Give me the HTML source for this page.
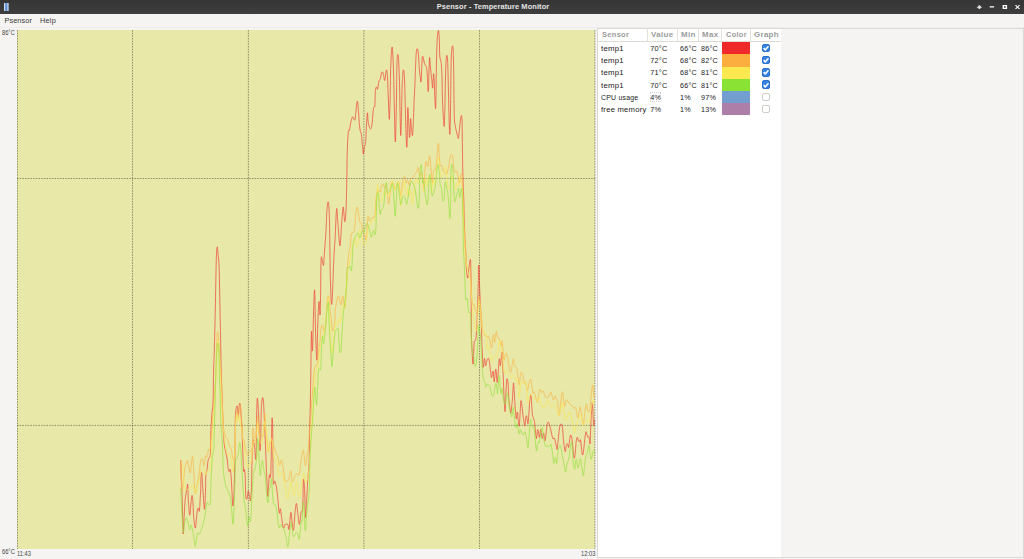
<!DOCTYPE html>
<html><head><meta charset="utf-8"><title>Psensor - Temperature Monitor</title>
<style>
html,body{margin:0;padding:0;}
body{width:1024px;height:559px;overflow:hidden;background:#f5f4f2;font-family:"Liberation Sans",sans-serif;position:relative;}
.abs{position:absolute;}
#title{left:0;top:0;width:1024px;height:14px;background:linear-gradient(#353535,#3e3e3e);}
#title .t{position:absolute;left:0;width:986px;top:2.4px;text-align:center;color:#e6e6e6;font-weight:bold;font-size:7.4px;line-height:9px;letter-spacing:0.12px;}
#menu{left:0;top:14px;width:1024px;height:12.5px;background:#f5f4f2;border-bottom:1px solid #efedea;font-size:7.4px;color:#3a3a3a;}
#menu span{position:absolute;top:2px;line-height:9px;letter-spacing:0.2px;}
#plot{left:17px;top:30px;width:578.2px;height:519px;background:#e8e8a8;}
.lbl{position:absolute;font-size:6.5px;color:#444;line-height:7px;transform:scaleX(0.88);transform-origin:0 0;white-space:nowrap;}
#panel{left:598px;top:29px;width:183.3px;height:528px;background:#fff;}
#hdr{position:absolute;left:598px;top:29px;width:183.3px;height:12px;border-bottom:1px solid #dedbd7;}
#hdr span{position:absolute;top:0.8px;transform-origin:0 0;font-size:7.2px;line-height:9px;font-weight:bold;color:#9b9b9b;letter-spacing:0.3px;}
#hdr i{position:absolute;top:0;width:1px;height:12px;background:#e4e1dd;}
.row{position:absolute;left:0;width:1024px;height:12.2px;}
.row .c{position:absolute;top:2px;transform-origin:0 0;font-size:7.3px;line-height:9px;color:#1a1a1a;letter-spacing:0.22px;white-space:nowrap;}
.sw{position:absolute;left:722px;top:0;width:28.5px;height:12.3px;}
.cb{position:absolute;left:761.7px;top:1.7px;width:8.4px;height:8.4px;box-sizing:border-box;border:1px solid #cfcbc6;border-radius:2px;background:#fff;}
.cb.on{background:#3584e4;border-color:#2a6fc9;}
.cb svg{position:absolute;left:-0.8px;top:-0.8px;}
.foc{position:absolute;left:649.9px;top:1.4px;width:11.3px;height:9.4px;border-radius:1px;border:1px dotted #d0d0d0;box-sizing:border-box;}
</style></head><body>
<div id="title" class="abs"><div class="t">Psensor - Temperature Monitor</div>
<svg class="abs" style="left:0;top:0" width="1024" height="14" viewBox="0 0 1024 14">
<rect x="4" y="3" width="4.5" height="8" fill="#5b8fd9"/><rect x="4" y="3" width="1.2" height="8" fill="#cfd8e8"/><rect x="7.3" y="3" width="1.2" height="8" fill="#cfd8e8"/>
<g fill="#fff" stroke="none">
<path d="M976.6,7.7 L979.4,5 L982.2,7.7 L980.3,7.7 L980.3,9.1 L978.5,9.1 L978.5,7.7 Z" fill="#e8e8e8"/>
<rect x="989.7" y="6.1" width="4.4" height="1.5" fill="#e0e0e0"/>
<path d="M1002.6,4.9 h4.5 v4.2 h-4.5 Z M1004,6.2 v1.6 h1.7 v-1.6 Z" fill-rule="evenodd"/>
<path d="M1014.9,5 L1016.3,5 L1017.5,6.4 L1018.7,5 L1020.1,5 L1018.3,7.05 L1020.1,9.1 L1018.7,9.1 L1017.5,7.7 L1016.3,9.1 L1014.9,9.1 L1016.7,7.05 Z"/>
</g></svg>
</div>
<div id="menu" class="abs"><span style="left:4.4px;letter-spacing:0.07px">Psensor</span><span style="left:40px">Help</span></div>
<div id="plot" class="abs"></div>
<svg class="abs" style="left:0;top:0" width="1024" height="559" viewBox="0 0 1024 559">
<g stroke="#5e5e44" stroke-width="0.62" stroke-dasharray="1.6,1.07" fill="none">
<path d="M17.5,30V549M132.5,30V549M248.4,30V549M363.9,30V549M479.5,30V549M594.9,30V549M17,178.5H595.2M17,425.4H595.2"/>
</g>
<g fill="none" stroke-width="0.72" stroke-linejoin="round" stroke-linecap="round" opacity="0.86">
<path d="M180.8,460.6C180.9,463.8 181.1,475.1 181.3,480.0C181.5,484.9 181.7,484.2 181.9,490.0C182.1,495.8 182.4,507.7 182.6,515.0C182.8,522.3 183.0,534.0 183.3,534.0C183.6,534.0 183.9,520.5 184.2,515.0C184.5,509.4 184.8,504.5 185.1,500.7C185.4,496.9 185.9,494.4 186.3,492.0C186.7,489.6 187.1,487.3 187.3,486.0C187.5,484.7 187.5,483.5 187.6,484.2C187.7,484.9 187.9,487.2 188.0,490.0C188.1,492.8 188.1,496.5 188.4,500.7C188.7,504.9 189.3,514.8 189.7,515.2C190.1,515.6 190.6,506.3 191.0,503.0C191.4,499.7 191.8,495.4 192.1,495.4C192.4,495.4 192.7,499.4 193.0,503.0C193.3,506.6 193.3,512.7 193.7,516.9C194.1,521.1 194.8,527.9 195.3,528.1C195.8,528.3 196.1,521.1 196.5,518.0C196.9,514.9 197.2,510.9 197.5,509.3C197.8,507.7 198.3,508.0 198.6,508.3C198.9,508.6 199.2,512.4 199.4,511.0C199.7,509.6 199.9,503.5 200.1,500.0C200.3,496.5 200.5,494.2 200.7,490.0C200.8,485.8 200.9,477.9 201.0,475.0C201.1,472.1 201.3,472.4 201.5,472.4C201.7,472.4 201.8,472.1 202.0,475.0C202.2,477.9 202.5,484.3 202.9,490.0C203.3,495.7 204.1,509.3 204.5,509.3C204.9,509.3 205.3,495.7 205.5,490.0C205.7,484.3 205.6,478.2 205.8,475.0C206.0,471.8 206.6,472.2 206.9,470.8C207.2,469.4 207.2,468.1 207.4,466.5C207.6,464.9 207.8,462.5 208.0,461.1C208.2,459.8 208.5,459.1 208.8,458.4C209.1,457.7 209.5,458.0 209.8,457.1C210.1,456.2 210.3,455.1 210.4,453.1C210.5,451.1 210.5,448.9 210.6,445.0C210.7,441.1 210.7,435.3 210.9,430.0C211.1,424.7 211.6,417.8 212.0,413.0C212.4,408.2 212.8,408.3 213.1,401.1C213.4,393.9 213.4,378.5 213.6,370.0C213.8,361.5 214.0,360.2 214.3,350.0C214.6,339.8 215.0,323.9 215.3,308.9C215.6,293.8 216.0,270.0 216.3,259.7C216.6,249.4 216.9,247.6 217.2,246.9C217.5,246.2 217.9,251.9 218.2,255.7C218.5,259.5 218.9,259.0 219.2,269.5C219.5,280.0 219.9,305.3 220.2,318.7C220.5,332.1 220.6,339.1 220.8,350.0C221.0,360.9 221.3,374.8 221.6,384.0C221.9,393.2 222.1,397.7 222.4,405.4C222.7,413.1 223.0,423.4 223.3,430.0C223.6,436.6 224.0,441.6 224.3,445.0C224.7,448.4 225.0,448.6 225.4,450.4C225.8,452.2 226.2,454.1 226.5,455.7C226.8,457.3 227.1,458.4 227.3,460.0C227.5,461.6 227.6,463.6 227.8,465.4C228.0,467.2 228.3,469.8 228.6,470.8C228.9,471.8 229.2,471.7 229.5,471.4C229.8,471.1 229.9,468.6 230.2,469.2C230.4,469.8 230.7,471.6 231.0,475.1C231.3,478.6 231.6,484.8 231.9,490.0C232.2,495.2 232.5,506.1 232.9,506.1C233.3,506.1 233.8,497.3 234.1,490.0C234.4,482.7 234.6,472.2 234.8,462.2C235.0,452.2 235.1,438.2 235.2,430.0C235.3,421.8 235.3,416.9 235.6,413.0C235.8,409.1 236.4,407.5 236.7,406.5C237.0,405.5 237.1,405.6 237.4,407.0C237.7,408.4 238.0,415.5 238.3,415.1C238.6,414.7 239.1,406.3 239.4,404.4C239.7,402.5 239.7,403.6 239.9,403.8C240.1,404.0 240.2,403.0 240.4,405.4C240.6,407.8 241.0,414.2 241.3,418.3C241.6,422.4 241.8,425.4 242.0,430.0C242.2,434.6 242.4,440.7 242.6,446.1C242.8,451.5 243.0,458.0 243.2,462.2C243.4,466.4 243.5,470.1 243.7,471.4C243.9,472.6 244.2,468.5 244.5,469.7C244.8,470.9 245.1,473.9 245.3,478.3C245.5,482.8 245.5,493.0 245.8,496.4C246.1,499.8 246.7,499.5 247.1,498.6C247.5,497.7 247.8,491.4 248.2,491.0C248.6,490.6 249.2,494.8 249.6,496.4C250.0,498.0 250.1,501.8 250.4,500.7C250.7,499.6 251.1,496.4 251.4,490.0C251.7,483.6 251.8,469.9 252.0,462.2C252.2,454.5 252.5,447.8 252.8,444.0C253.1,440.2 253.4,439.7 253.6,439.7C253.8,439.7 254.0,442.0 254.2,444.0C254.4,446.0 254.7,448.9 254.9,451.5C255.2,454.1 255.5,459.5 255.7,459.5C255.9,459.5 256.1,456.4 256.2,451.5C256.3,446.6 256.3,436.4 256.4,430.0C256.5,423.6 256.5,418.3 256.7,413.0C256.9,407.7 257.1,398.1 257.4,398.1C257.7,398.1 258.2,407.7 258.5,413.0C258.8,418.3 258.9,423.8 259.2,430.0C259.4,436.2 259.8,448.6 260.0,450.4C260.2,452.2 260.5,444.1 260.6,440.7C260.8,437.3 260.8,435.5 260.9,430.0C261.0,424.5 261.1,413.0 261.4,407.6C261.7,402.2 262.1,398.6 262.5,397.7C262.9,396.8 263.2,398.8 263.5,402.2C263.8,405.6 264.1,413.7 264.3,418.3C264.5,422.9 264.6,424.5 264.8,430.0C265.0,435.5 265.4,443.4 265.7,451.5C266.0,459.6 266.5,471.9 266.8,478.3C267.1,484.7 267.1,487.0 267.3,490.0C267.5,493.0 267.6,496.4 267.8,496.4C268.0,496.4 268.0,493.6 268.3,490.0C268.6,486.4 269.0,477.2 269.4,475.1C269.8,473.0 270.2,479.5 270.5,477.3C270.8,475.1 270.9,468.3 271.1,462.2C271.3,456.1 271.4,446.1 271.5,440.7C271.6,435.3 271.6,433.6 271.7,430.0C271.8,426.4 271.8,420.5 271.9,418.9C272.0,417.3 272.4,416.9 272.5,420.5C272.6,424.1 272.7,430.5 272.8,440.7C272.9,450.9 272.9,474.9 273.2,481.6C273.5,488.3 274.3,480.1 274.8,481.0C275.3,481.9 276.0,485.0 276.4,487.0C276.8,489.0 276.9,490.7 277.2,493.0C277.5,495.3 277.6,497.3 278.0,500.7C278.4,504.1 278.9,511.8 279.3,513.1C279.7,514.5 280.0,507.8 280.4,508.8C280.8,509.8 281.3,515.8 281.8,519.0C282.3,522.2 282.9,527.2 283.4,528.1C283.9,529.0 284.6,525.0 285.0,524.4C285.4,523.8 285.5,524.4 286.0,524.4C286.5,524.4 287.4,523.8 287.9,524.6C288.4,525.4 288.5,531.2 289.0,529.2C289.5,527.2 290.3,514.1 290.8,512.6C291.3,511.1 291.4,517.2 291.9,520.1C292.3,523.0 293.0,531.7 293.5,530.3C294.0,528.9 294.6,516.0 295.1,511.5C295.6,507.0 296.1,503.0 296.5,503.4C296.9,503.8 297.3,510.1 297.8,513.6C298.3,517.1 298.9,524.6 299.4,524.4C299.9,524.2 300.5,514.9 301.0,512.6C301.5,510.4 302.0,513.2 302.3,510.9C302.6,508.6 302.9,502.8 303.0,498.6C303.1,494.5 303.1,489.2 303.2,486.0C303.3,482.8 303.3,479.7 303.5,479.4C303.7,479.1 304.0,481.4 304.2,484.0C304.4,486.6 304.6,489.4 304.8,495.0C305.0,500.6 305.2,516.6 305.5,517.4C305.8,518.2 306.3,504.9 306.6,500.0C306.9,495.1 307.1,492.0 307.3,488.0C307.5,484.0 307.7,480.5 308.0,476.2C308.3,471.9 308.8,469.9 309.1,462.2C309.4,454.5 309.4,438.7 309.6,430.0C309.8,421.3 310.0,418.3 310.2,410.0C310.4,401.7 310.5,390.0 310.7,380.0C310.9,370.0 311.0,357.9 311.1,349.8C311.2,341.7 311.4,332.1 311.5,331.3C311.6,330.5 311.9,341.7 312.0,345.0C312.1,348.3 312.3,351.3 312.4,351.0C312.5,350.7 312.6,349.5 312.8,343.0C313.0,336.5 313.3,320.8 313.6,312.0C313.9,303.2 314.3,288.7 314.6,290.0C314.9,291.3 315.1,310.8 315.3,320.0C315.5,329.2 315.7,338.3 316.0,345.0C316.3,351.7 316.6,361.7 316.9,360.0C317.1,358.3 317.3,343.3 317.5,335.0C317.7,326.7 318.1,315.6 318.3,310.0C318.6,304.4 318.8,301.7 319.0,301.5C319.2,301.3 319.4,306.8 319.6,309.0C319.8,311.2 319.9,316.9 320.1,314.6C320.3,312.3 320.5,302.8 320.6,295.0C320.7,287.2 320.8,274.3 320.9,268.0C321.0,261.7 321.1,258.2 321.4,257.0C321.6,255.8 322.0,259.6 322.4,261.0C322.8,262.4 323.2,266.0 323.5,265.5C323.8,265.0 323.9,260.6 324.1,258.0C324.3,255.4 324.3,254.2 324.6,250.0C324.9,245.8 325.5,239.8 325.9,233.0C326.3,226.2 326.6,214.4 327.0,209.3C327.4,204.2 328.0,200.3 328.4,202.4C328.8,204.5 329.2,209.2 329.5,222.0C329.8,234.8 330.0,265.7 330.4,279.4C330.8,293.1 331.2,307.3 331.8,304.0C332.4,300.7 333.3,270.4 333.8,259.7C334.3,249.0 334.5,248.5 335.0,240.0C335.5,231.5 336.1,211.3 336.6,208.8C337.1,206.3 337.4,218.8 338.0,225.0C338.6,231.2 339.3,245.9 339.9,245.9C340.5,245.9 341.0,231.4 341.5,225.0C342.0,218.6 342.7,208.9 343.1,207.2C343.5,205.5 343.7,212.6 344.0,215.0C344.3,217.4 344.6,222.5 344.9,221.7C345.2,220.9 345.7,215.3 346.0,210.0C346.3,204.7 346.4,197.5 346.6,190.0C346.8,182.5 346.9,172.5 347.0,165.0C347.1,157.5 347.3,150.6 347.5,145.0C347.7,139.4 348.1,133.7 348.4,131.2C348.7,128.7 349.1,131.5 349.5,130.1C349.9,128.7 350.2,124.8 350.7,122.6C351.2,120.4 351.9,118.0 352.4,117.2C352.8,116.4 353.0,117.3 353.4,117.8C353.8,118.2 354.6,121.2 355.0,119.9C355.4,118.6 355.7,112.8 356.1,109.7C356.5,106.6 357.0,100.7 357.4,101.1C357.8,101.5 358.1,107.8 358.5,111.9C358.9,116.0 359.1,122.4 359.5,125.8C359.9,129.2 360.3,131.1 360.6,132.3C360.9,133.6 361.1,131.9 361.3,133.3C361.5,134.7 361.8,138.4 362.0,140.9C362.2,143.4 362.6,146.4 362.8,148.6C363.0,150.8 363.1,154.2 363.4,154.0C363.6,153.8 364.0,149.1 364.3,147.5C364.6,145.9 365.1,145.6 365.3,144.3C365.6,143.1 365.6,142.7 365.8,140.0C366.0,137.3 366.0,132.5 366.3,128.0C366.6,123.5 367.1,114.0 367.4,112.9C367.7,111.8 367.8,119.1 368.1,121.5C368.5,123.9 369.0,126.2 369.5,127.4C370.0,128.6 370.7,129.3 371.1,128.5C371.6,127.7 371.8,125.7 372.2,122.6C372.6,119.5 372.9,112.4 373.3,109.7C373.7,107.0 374.1,107.2 374.4,106.5C374.7,105.8 374.7,108.1 374.9,105.4C375.1,102.7 375.1,93.5 375.4,90.4C375.7,87.4 376.1,87.3 376.5,87.1C376.9,86.9 377.2,90.1 377.6,89.2C378.0,88.3 378.3,83.5 378.8,81.7C379.3,79.9 379.9,79.9 380.4,78.5C380.8,77.1 381.1,74.2 381.5,73.1C381.9,72.0 382.2,71.6 382.6,72.0C383.0,72.4 383.2,73.9 383.6,75.3C384.0,76.7 384.3,81.0 384.7,80.6C385.1,80.2 385.5,74.9 385.8,73.1C386.1,71.3 386.3,69.4 386.6,69.9C386.9,70.4 387.1,72.1 387.4,76.3C387.7,80.5 387.9,87.8 388.2,95.0C388.5,102.2 389.0,118.6 389.3,119.4C389.6,120.2 389.9,108.1 390.1,100.0C390.3,91.9 390.4,78.9 390.6,71.0C390.8,63.1 391.1,56.7 391.4,52.7C391.7,48.8 391.9,46.0 392.2,47.3C392.5,48.5 392.8,54.5 393.1,60.2C393.4,65.9 393.6,73.4 393.8,81.7C394.0,90.0 394.1,100.0 394.4,110.0C394.6,120.0 395.0,140.7 395.3,141.9C395.6,143.1 395.9,126.2 396.1,117.2C396.3,108.2 396.5,96.6 396.6,88.0C396.7,79.4 396.8,70.9 396.9,65.6C397.0,60.2 397.2,57.6 397.4,55.9C397.6,54.2 397.9,53.8 398.1,55.4C398.4,57.0 398.7,61.2 398.9,65.6C399.1,70.0 399.3,74.3 399.5,81.7C399.7,89.1 399.8,101.0 400.0,110.0C400.2,119.0 400.5,134.3 400.7,135.5C400.9,136.7 401.2,125.1 401.4,117.2C401.6,109.3 401.9,94.8 402.1,88.0C402.3,81.2 402.5,79.3 402.7,76.3C402.9,73.3 403.2,69.9 403.5,69.9C403.8,69.9 404.1,72.1 404.3,76.3C404.6,80.5 404.8,87.3 405.0,95.0C405.2,102.7 405.4,114.0 405.7,122.6C406.0,131.2 406.4,143.5 406.6,146.4C406.9,149.3 407.1,144.9 407.2,140.0C407.3,135.1 407.4,122.6 407.5,117.2C407.6,111.8 407.7,106.7 407.9,107.6C408.1,108.5 408.4,117.6 408.7,122.6C409.0,127.6 409.3,137.6 409.6,137.6C409.9,137.6 410.2,125.7 410.4,122.6C410.6,119.5 410.5,117.9 410.7,118.8C410.9,119.7 411.1,125.2 411.4,128.0C411.7,130.8 412.2,136.4 412.5,135.5C412.8,134.6 413.0,128.3 413.3,122.6C413.6,116.9 413.8,107.9 414.1,101.1C414.4,94.3 414.8,87.6 415.0,81.7C415.2,75.8 415.4,70.6 415.6,65.6C415.8,60.6 416.1,54.4 416.4,51.6C416.7,48.8 417.1,48.4 417.5,48.9C417.9,49.4 418.2,51.6 418.5,54.9C418.8,58.2 419.0,65.2 419.3,68.8C419.6,72.4 419.9,74.1 420.2,76.3C420.5,78.5 420.7,83.5 421.0,81.7C421.3,79.9 421.6,69.8 421.8,65.6C422.1,61.4 422.2,57.6 422.5,56.5C422.8,55.4 423.3,58.0 423.6,59.1C423.9,60.2 424.1,62.3 424.4,63.4C424.7,64.5 425.1,64.9 425.5,65.6C425.9,66.3 426.3,65.9 426.6,67.7C426.9,69.5 427.2,72.6 427.4,76.3C427.6,80.0 427.7,87.6 427.9,89.8C428.1,92.0 428.3,92.6 428.5,89.3C428.7,86.0 428.8,75.3 429.0,70.0C429.2,64.7 429.4,58.2 429.6,57.5C429.8,56.8 430.1,63.2 430.3,66.0C430.6,68.8 430.8,71.6 431.1,74.2C431.4,76.8 431.8,79.4 432.0,81.7C432.2,84.0 432.4,88.5 432.6,88.2C432.8,87.9 432.9,82.4 433.1,80.0C433.3,77.6 433.4,73.3 433.6,73.6C433.8,73.9 434.1,77.1 434.3,81.7C434.5,86.3 434.8,96.6 435.0,101.1C435.2,105.6 435.4,109.5 435.6,108.6C435.8,107.7 435.9,103.8 436.0,95.7C436.1,87.6 436.3,69.7 436.5,60.2C436.7,50.7 437.0,43.7 437.3,38.7C437.6,33.7 438.1,30.4 438.4,30.4C438.7,30.4 439.1,34.6 439.3,38.7C439.5,42.8 439.5,51.3 439.7,54.9C439.9,58.5 440.3,58.5 440.6,60.2C440.9,61.9 441.2,62.4 441.4,65.1C441.6,67.8 441.8,70.3 442.0,76.3C442.2,82.3 442.2,93.8 442.5,101.1C442.8,108.4 443.2,116.3 443.5,120.4C443.8,124.5 444.1,128.1 444.3,125.8C444.5,123.5 444.7,114.1 444.9,106.5C445.1,98.9 445.2,87.4 445.4,80.0C445.6,72.6 445.8,66.1 446.0,62.0C446.2,57.9 446.5,55.7 446.8,55.4C447.1,55.1 447.4,55.9 447.6,60.0C447.8,64.1 448.0,72.2 448.2,80.0C448.4,87.8 448.6,98.5 448.8,106.5C449.0,114.5 449.2,123.4 449.4,128.0C449.6,132.6 449.7,135.7 449.9,133.9C450.1,132.1 450.2,124.9 450.4,117.2C450.5,109.5 450.7,97.5 450.8,88.0C450.9,78.5 451.0,66.8 451.2,60.2C451.4,53.6 451.6,50.6 451.9,48.4C452.2,46.2 452.6,44.8 452.9,46.8C453.2,48.8 453.3,53.3 453.5,60.2C453.7,67.1 453.8,78.5 453.9,88.0C454.0,97.5 454.1,110.9 454.3,117.2C454.5,123.5 455.0,123.5 455.3,125.8C455.6,128.1 456.0,129.6 456.4,131.2C456.8,132.8 457.1,134.3 457.5,135.5C457.9,136.7 458.1,139.4 458.5,138.2C458.9,136.9 459.2,131.3 459.6,128.0C460.0,124.7 460.4,120.4 460.7,118.3C461.0,116.2 461.4,114.9 461.6,115.6C461.8,116.3 462.0,117.7 462.1,122.6C462.2,127.5 462.3,138.5 462.4,145.0C462.5,151.5 462.5,155.2 462.6,161.5C462.7,167.8 462.9,176.6 463.1,183.0C463.3,189.4 463.6,193.5 463.8,200.0C464.0,206.5 464.1,214.7 464.3,222.0C464.5,229.3 464.9,239.0 465.1,243.7C465.3,248.4 465.4,246.1 465.6,250.0C465.8,253.9 466.0,262.2 466.3,266.9C466.6,271.6 467.2,277.9 467.7,278.1C468.1,278.3 468.6,271.0 469.0,267.9C469.4,264.8 470.1,258.6 470.4,259.3C470.7,260.0 470.8,265.4 470.9,272.2C471.0,279.0 471.1,289.9 471.2,300.0C471.3,310.1 471.3,324.7 471.4,333.0C471.5,341.3 471.7,344.8 472.0,350.0C472.3,355.2 472.7,364.2 473.0,364.2C473.3,364.2 473.6,353.8 473.8,350.0C474.0,346.2 474.0,343.5 474.3,341.6C474.6,339.8 475.4,342.1 475.9,338.9C476.3,335.7 476.7,328.6 477.0,322.2C477.3,315.8 477.6,307.2 477.8,300.7C478.0,294.2 478.1,288.9 478.3,283.0C478.5,277.1 478.6,265.2 478.8,265.2C479.0,265.2 479.3,277.1 479.5,283.0C479.7,288.9 479.9,294.2 480.2,300.7C480.5,307.2 481.0,315.4 481.3,322.2C481.6,329.0 481.6,336.6 481.8,341.6C482.0,346.6 482.1,347.7 482.3,352.0C482.5,356.3 482.7,366.3 483.1,367.4C483.5,368.4 484.1,358.6 484.5,358.3C484.9,358.0 485.2,365.3 485.6,365.8C486.0,366.3 486.3,362.8 486.7,361.5C487.1,360.2 487.7,358.3 488.1,358.3C488.6,358.3 489.0,359.2 489.4,361.5C489.8,363.8 490.3,369.5 490.7,372.2C491.1,374.9 491.1,377.8 491.5,377.6C491.9,377.4 492.7,370.4 493.1,371.1C493.6,371.8 493.8,382.2 494.2,381.9C494.6,381.5 495.3,368.9 495.8,369.0C496.3,369.1 496.7,381.9 497.1,382.4C497.5,382.9 497.8,376.1 498.2,372.2C498.6,368.3 498.9,359.9 499.3,358.8C499.7,357.7 500.0,366.1 500.3,365.8C500.6,365.5 501.1,359.4 501.4,357.2C501.7,355.0 501.8,350.8 502.0,352.4C502.2,354.0 502.6,361.8 502.8,366.9C503.1,372.0 503.3,377.5 503.5,383.0C503.7,388.5 503.9,395.2 504.2,400.0C504.5,404.8 504.8,413.2 505.1,411.5C505.4,409.8 505.8,395.4 506.1,390.0C506.4,384.6 506.5,380.4 506.8,379.2C507.1,378.0 507.6,379.5 508.0,383.0C508.4,386.5 508.5,395.6 508.9,400.0C509.3,404.4 509.9,407.1 510.2,409.3C510.5,411.5 510.5,414.5 510.9,413.1C511.2,411.7 511.9,404.9 512.3,400.7C512.7,396.5 512.9,390.9 513.1,388.0C513.3,385.1 513.4,382.3 513.6,383.0C513.8,383.7 514.0,389.2 514.2,392.0C514.4,394.8 514.5,396.8 514.7,400.0C514.9,403.2 515.2,408.3 515.5,411.5C515.8,414.7 516.1,418.8 516.4,419.0C516.7,419.2 516.9,413.6 517.1,412.6C517.3,411.6 517.5,411.9 517.7,413.1C517.9,414.4 517.9,418.0 518.2,420.1C518.5,422.2 519.0,427.4 519.3,426.0C519.6,424.6 519.9,415.7 520.2,411.5C520.5,407.3 520.6,401.6 520.9,400.7C521.2,399.8 521.6,403.4 522.0,406.1C522.4,408.8 522.8,414.2 523.1,416.9C523.5,419.6 523.8,420.7 524.1,422.2C524.4,423.7 524.6,426.7 524.9,426.0C525.2,425.3 525.4,419.6 525.7,417.9C526.0,416.2 526.3,415.3 526.6,415.8C526.9,416.3 527.1,419.9 527.4,421.1C527.6,422.4 527.8,424.9 528.1,423.3C528.4,421.7 528.7,415.6 529.0,411.5C529.3,407.4 529.7,401.4 530.0,398.6C530.3,395.8 530.6,394.1 530.9,394.8C531.2,395.5 531.4,399.6 531.6,402.9C531.9,406.2 532.0,412.0 532.4,414.7C532.8,417.4 533.4,417.8 533.8,419.0C534.1,420.2 534.2,420.2 534.5,422.2C534.8,424.2 535.1,428.1 535.4,430.8C535.7,433.5 536.1,438.7 536.5,438.5C536.9,438.3 537.2,430.6 537.6,429.7C538.0,428.8 538.3,431.7 538.6,433.0C538.9,434.3 539.2,437.9 539.5,437.3C539.8,436.8 540.3,430.4 540.6,429.7C540.9,429.0 541.0,431.5 541.3,433.0C541.6,434.5 542.0,438.5 542.4,438.5C542.8,438.5 543.1,433.2 543.5,433.0C543.9,432.8 544.2,436.0 544.5,437.3C544.8,438.6 544.9,441.4 545.2,440.7C545.5,440.0 545.8,435.7 546.1,433.0C546.4,430.3 546.8,426.2 547.2,424.4C547.6,422.6 548.0,421.8 548.5,422.2C549.0,422.6 549.5,425.1 549.9,426.5C550.3,427.9 550.6,429.2 551.0,430.8C551.4,432.4 551.8,434.9 552.1,436.2C552.5,437.5 552.8,438.6 553.1,438.9C553.5,439.2 553.8,437.6 554.2,438.0C554.6,438.4 554.9,440.0 555.3,441.5C555.7,443.0 556.1,445.6 556.4,446.8C556.7,448.1 556.8,450.2 557.1,449.0C557.4,447.8 557.8,443.2 558.2,439.6C558.6,436.0 559.1,430.2 559.6,427.6C560.1,425.0 560.7,423.8 561.2,423.8C561.7,423.8 562.1,425.2 562.5,427.6C562.9,430.0 563.0,435.2 563.3,438.3C563.6,441.4 563.9,444.3 564.2,446.5C564.5,448.7 564.9,451.7 565.3,451.6C565.6,451.5 566.0,447.0 566.3,445.7C566.6,444.4 566.8,443.6 567.1,443.6C567.4,443.6 567.9,445.1 568.2,445.7C568.5,446.3 568.4,448.3 568.7,447.2C569.0,446.1 569.5,441.0 569.8,439.0C570.1,437.0 570.2,435.2 570.6,435.1C571.0,435.0 571.5,436.5 571.9,438.3C572.2,440.1 572.4,443.1 572.7,445.8C573.0,448.5 573.2,452.2 573.5,454.3C573.8,456.4 574.1,458.6 574.4,458.1C574.7,457.6 575.1,453.9 575.4,451.1C575.7,448.3 575.9,443.7 576.2,441.4C576.5,439.1 576.9,437.3 577.3,437.2C577.7,437.1 578.0,440.0 578.4,440.8C578.8,441.6 579.0,442.0 579.4,441.8C579.8,441.6 580.2,438.9 580.5,439.8C580.8,440.7 581.0,444.5 581.3,447.0C581.6,449.5 582.1,454.2 582.5,454.9C582.9,455.6 583.1,453.4 583.5,451.1C583.9,448.8 584.2,444.2 584.6,441.0C585.0,437.8 585.5,432.9 585.9,431.9C586.3,430.9 586.6,434.2 587.0,435.1C587.4,436.0 587.6,437.0 588.0,437.3C588.4,437.6 588.8,435.9 589.1,437.0C589.4,438.1 589.8,444.2 590.0,444.0C590.2,443.8 590.3,438.7 590.4,436.0C590.5,433.3 590.5,431.7 590.7,427.6C590.9,423.5 591.2,415.7 591.5,411.5C591.8,407.3 592.1,402.4 592.3,402.4C592.5,402.4 592.7,407.7 592.9,411.5C593.1,415.3 593.4,424.0 593.7,425.4C594.0,426.8 594.4,421.0 594.5,420.1" stroke="#ef2929"/>
<path d="M180.8,460.3C180.9,463.6 181.3,474.9 181.5,480.0C181.7,485.1 181.9,490.2 182.2,491.0C182.4,491.8 182.7,487.7 183.0,485.0C183.3,482.3 183.8,477.9 184.1,475.0C184.4,472.1 184.6,469.3 184.9,467.6C185.2,465.9 185.4,465.7 185.7,464.9C186.0,464.1 186.2,463.5 186.5,462.7C186.8,461.9 187.1,460.3 187.4,460.3C187.7,460.3 187.8,461.5 188.1,462.7C188.3,463.9 188.6,466.2 188.9,467.6C189.2,469.0 189.4,470.4 189.7,471.3C189.9,472.2 190.2,473.5 190.4,472.9C190.6,472.3 190.8,469.8 191.0,467.6C191.2,465.5 191.6,461.9 191.8,460.0C192.1,458.1 192.3,456.3 192.5,456.3C192.7,456.3 192.9,458.3 193.1,460.0C193.3,461.7 193.3,464.0 193.5,466.5C193.7,469.0 193.8,471.6 194.0,475.0C194.2,478.4 194.4,483.8 194.6,487.0C194.8,490.2 194.9,493.9 195.2,494.1C195.5,494.3 196.1,490.2 196.5,488.0C196.9,485.8 197.4,483.2 197.8,481.0C198.2,478.8 198.8,477.4 199.1,475.0C199.4,472.6 199.7,468.6 199.9,466.5C200.1,464.4 200.2,463.4 200.4,462.2C200.6,461.0 200.9,460.1 201.2,459.5C201.5,458.9 201.7,458.3 202.0,458.4C202.3,458.5 202.7,459.2 202.9,460.0C203.1,460.8 203.2,462.4 203.4,463.3C203.6,464.2 204.0,465.9 204.2,465.7C204.4,465.5 204.5,463.7 204.7,462.2C204.9,460.7 205.1,457.9 205.3,456.8C205.5,455.7 205.6,455.6 205.8,455.5C206.0,455.4 206.4,456.0 206.6,456.3C206.8,456.6 206.9,457.6 207.1,457.1C207.3,456.7 207.5,454.9 207.7,453.6C207.9,452.4 208.2,450.1 208.5,449.6C208.8,449.1 209.1,450.2 209.3,450.4C209.5,450.6 209.7,451.3 209.9,450.9C210.1,450.4 210.2,449.5 210.4,447.7C210.6,445.9 210.5,442.9 210.8,440.0C211.1,437.1 211.6,434.5 212.0,430.0C212.4,425.5 212.8,417.6 213.1,413.0C213.4,408.4 213.8,406.7 214.1,402.2C214.4,397.7 214.9,391.5 215.2,386.1C215.5,380.7 215.8,376.9 216.0,370.0C216.2,363.1 216.3,351.4 216.6,345.0C216.9,338.6 217.3,332.3 217.6,331.5C217.9,330.7 218.3,336.1 218.6,340.0C218.9,343.9 219.1,349.7 219.5,355.0C219.9,360.3 220.8,367.2 221.1,372.0C221.4,376.8 221.4,378.4 221.6,384.0C221.8,389.6 222.2,399.7 222.4,405.4C222.6,411.1 222.8,414.2 223.0,418.3C223.2,422.4 223.4,427.0 223.8,430.0C224.2,433.0 224.9,435.0 225.4,436.4C225.9,437.8 226.5,437.5 227.0,438.6C227.5,439.7 228.1,441.5 228.6,442.9C229.1,444.3 229.8,446.1 230.2,447.2C230.6,448.3 230.9,447.9 231.3,449.3C231.7,450.7 232.0,454.2 232.4,455.8C232.8,457.4 233.2,458.3 233.5,459.0C233.8,459.7 234.0,462.2 234.2,460.1C234.4,458.0 234.7,451.1 234.9,446.1C235.1,441.1 235.1,434.7 235.3,430.0C235.5,425.3 235.7,421.2 235.9,418.0C236.1,414.8 236.3,411.8 236.6,411.0C236.9,410.2 237.2,411.8 237.5,413.0C237.8,414.2 238.0,418.7 238.3,418.0C238.6,417.3 238.9,411.1 239.2,409.0C239.5,406.9 239.9,405.2 240.2,405.4C240.5,405.6 240.6,407.9 240.8,410.0C241.0,412.1 241.2,415.0 241.5,418.3C241.8,421.6 242.0,426.6 242.3,430.0C242.6,433.4 242.8,436.8 243.1,438.6C243.4,440.4 243.8,438.9 244.2,440.7C244.6,442.5 244.9,447.3 245.3,449.3C245.8,451.3 246.5,451.6 246.9,452.6C247.3,453.6 247.6,455.5 248.0,455.3C248.4,455.1 249.1,452.3 249.6,451.5C250.1,450.7 250.8,451.3 251.2,450.4C251.6,449.5 252.1,448.8 252.3,446.1C252.6,443.4 252.6,437.1 252.7,434.0C252.8,430.9 252.9,427.8 253.1,427.5C253.2,427.2 253.4,430.1 253.6,432.0C253.8,433.9 254.0,437.9 254.3,438.6C254.6,439.3 255.2,437.4 255.5,436.0C255.8,434.6 256.1,432.7 256.4,430.0C256.6,427.3 256.8,422.3 257.0,420.0C257.2,417.7 257.4,415.7 257.6,416.2C257.8,416.7 258.0,420.2 258.2,423.0C258.4,425.8 258.5,430.8 258.8,433.0C259.1,435.2 259.4,435.8 259.8,436.0C260.2,436.2 260.6,434.0 261.0,434.0C261.4,434.0 262.1,436.2 262.5,436.0C262.9,435.8 263.3,435.0 263.6,433.0C263.9,431.0 264.0,427.3 264.2,424.0C264.4,420.7 264.7,413.0 264.9,413.0C265.1,413.0 265.3,420.8 265.5,424.0C265.7,427.2 265.7,429.2 265.9,432.0C266.1,434.8 266.5,437.6 266.8,440.7C267.1,443.8 267.5,448.6 267.8,450.4C268.1,452.2 268.3,452.8 268.6,451.5C268.9,450.2 269.3,444.8 269.7,442.9C270.1,441.0 270.7,440.6 271.1,440.2C271.5,439.8 271.8,439.7 272.1,440.7C272.5,441.7 272.8,445.0 273.2,446.1C273.6,447.2 273.9,446.3 274.3,447.2C274.7,448.1 275.0,450.2 275.4,451.5C275.8,452.8 276.4,453.6 276.8,454.7C277.2,455.8 277.5,456.1 278.0,457.9C278.5,459.7 279.2,464.9 279.7,465.4C280.1,465.9 280.3,462.0 280.7,461.1C281.1,460.2 281.4,459.4 281.8,460.1C282.2,460.8 282.5,463.2 282.9,465.4C283.2,467.5 283.5,470.5 283.9,473.0C284.2,475.5 284.6,479.1 285.0,480.5C285.4,481.9 285.4,481.8 286.0,481.6C286.6,481.4 287.9,481.2 288.7,479.4C289.5,477.6 290.2,470.2 290.8,470.6C291.4,471.0 291.7,480.7 292.4,481.6C293.1,482.5 294.4,477.6 295.1,476.2C295.8,474.8 296.0,473.9 296.7,473.5C297.4,473.1 298.7,476.1 299.4,474.0C300.1,471.9 300.3,465.0 301.0,461.1C301.7,457.2 302.7,449.6 303.4,450.4C304.1,451.2 304.7,464.9 305.3,466.0C305.9,467.1 306.3,460.2 306.9,456.9C307.4,453.6 308.2,450.6 308.6,446.1C309.0,441.6 309.1,433.2 309.4,430.0C309.7,426.8 309.9,430.3 310.2,426.6C310.5,422.9 311.0,414.2 311.4,408.0C311.8,401.8 312.1,395.9 312.7,389.2C313.2,382.5 314.0,371.5 314.7,367.6C315.4,363.7 316.1,366.9 316.7,365.6C317.2,364.3 317.6,363.1 318.0,359.7C318.4,356.3 318.9,348.2 319.3,345.0C319.7,341.8 319.9,342.3 320.1,340.4C320.3,338.5 320.2,335.6 320.4,333.4C320.6,331.2 320.9,328.4 321.2,327.0C321.5,325.6 322.0,325.1 322.3,325.1C322.6,325.1 322.9,326.1 323.1,327.0C323.3,327.9 323.4,329.4 323.6,330.2C323.8,330.9 324.2,331.9 324.4,331.5C324.6,331.1 324.8,329.1 325.0,328.1C325.2,327.1 325.3,326.8 325.5,325.4C325.7,324.0 325.8,322.9 326.0,320.0C326.2,317.1 326.5,311.6 326.8,308.0C327.1,304.4 327.3,300.5 327.6,298.5C327.9,296.5 328.2,295.4 328.5,296.1C328.8,296.9 329.2,300.0 329.5,303.0C329.8,306.0 330.2,311.2 330.5,314.0C330.8,316.8 331.2,318.1 331.4,320.0C331.6,321.9 331.7,323.7 331.8,325.4C331.9,327.1 332.0,329.3 332.2,330.2C332.4,331.1 332.6,331.0 332.8,330.7C333.0,330.4 333.3,329.0 333.6,328.1C333.9,327.2 334.2,326.8 334.4,325.4C334.6,324.0 334.7,322.8 334.9,320.0C335.1,317.2 334.8,312.9 335.4,308.9C336.0,304.9 337.4,296.8 338.3,296.1C339.2,295.5 340.1,305.0 340.9,305.0C341.6,305.0 342.1,295.8 342.8,296.1C343.5,296.4 344.5,311.3 345.2,306.9C345.9,302.5 346.5,278.7 347.2,269.5C347.9,260.3 348.6,255.6 349.1,251.8C349.6,248.1 349.7,250.0 350.1,247.0C350.5,244.0 350.8,236.5 351.4,234.0C352.0,231.5 353.2,233.3 353.8,231.9C354.4,230.5 354.5,228.8 354.9,225.4C355.3,222.0 355.6,214.6 356.0,211.5C356.4,208.4 357.0,206.7 357.4,207.0C357.8,207.3 358.1,211.2 358.5,213.6C358.9,216.0 359.2,220.1 359.7,221.7C360.2,223.3 360.9,222.1 361.4,223.3C361.8,224.5 362.0,227.1 362.4,228.7C362.8,230.3 363.6,231.8 364.0,233.0C364.4,234.2 364.7,235.1 365.1,236.2C365.5,237.3 365.8,241.2 366.2,239.4C366.6,237.6 367.0,229.2 367.3,225.4C367.6,221.6 367.7,217.0 368.1,216.3C368.5,215.6 369.0,220.8 369.6,221.1C370.2,221.4 370.9,218.5 371.6,217.9C372.3,217.3 373.1,217.9 373.7,217.4C374.3,216.9 374.6,217.5 375.0,214.7C375.4,211.9 375.6,204.0 375.9,200.7C376.1,197.4 376.3,196.5 376.5,195.0C376.7,193.5 376.9,192.3 377.1,191.5C377.4,190.7 377.7,190.0 378.0,189.9C378.3,189.8 378.6,190.3 379.0,190.7C379.4,191.0 380.0,192.8 380.4,192.0C380.8,191.2 381.0,187.3 381.4,186.1C381.8,184.8 382.2,184.8 382.5,184.5C382.8,184.2 383.0,183.8 383.3,184.2C383.6,184.5 383.9,185.9 384.1,186.6C384.3,187.3 384.5,188.4 384.7,188.3C384.9,188.2 385.2,186.6 385.5,186.1C385.8,185.6 386.0,184.7 386.3,185.6C386.6,186.5 386.9,189.8 387.1,191.5C387.3,193.2 387.5,194.4 387.6,195.8C387.8,197.2 387.8,198.6 388.0,200.0C388.2,201.4 388.4,204.0 388.6,204.0C388.8,204.0 389.0,201.6 389.2,200.0C389.4,198.4 389.7,196.1 390.0,194.2C390.3,192.3 390.6,190.6 390.8,188.8C391.0,187.0 391.2,184.5 391.4,183.4C391.6,182.3 391.9,182.5 392.2,182.4C392.5,182.3 392.7,182.2 393.0,182.6C393.3,183.0 393.5,184.2 393.8,185.0C394.1,185.8 394.3,186.5 394.6,187.2C394.9,187.9 395.1,189.1 395.4,189.1C395.7,189.1 395.9,187.8 396.2,187.2C396.5,186.6 396.8,186.2 397.0,185.6C397.2,185.0 397.4,184.1 397.6,183.4C397.8,182.7 398.2,181.6 398.4,181.5C398.6,181.4 398.7,181.8 398.9,182.6C399.1,183.4 399.2,184.6 399.4,186.1C399.6,187.6 399.8,190.0 400.0,191.5C400.2,193.0 400.5,195.4 400.8,195.2C401.1,195.0 401.3,192.4 401.6,190.4C401.9,188.4 402.1,185.4 402.4,183.4C402.7,181.4 402.9,179.8 403.2,178.6C403.5,177.4 404.0,176.4 404.3,176.2C404.6,176.0 404.8,176.8 405.1,177.5C405.4,178.2 405.7,179.8 405.9,180.7C406.1,181.6 406.2,183.2 406.4,183.2C406.6,183.2 406.9,181.0 407.2,180.7C407.5,180.4 407.7,180.9 408.0,181.5C408.3,182.1 408.6,183.3 408.8,184.0C409.0,184.7 409.2,185.8 409.4,185.6C409.6,185.4 409.7,183.8 409.9,182.9C410.1,182.0 410.1,181.0 410.4,180.2C410.7,179.4 411.1,178.8 411.5,178.3C411.9,177.9 412.2,177.8 412.6,177.5C413.0,177.2 413.4,176.9 413.7,176.4C414.0,175.9 414.3,174.9 414.7,174.3C415.1,173.7 415.4,173.5 415.8,173.0C416.2,172.5 416.5,172.0 416.9,171.1C417.3,170.2 417.8,166.8 418.2,167.4C418.6,168.0 419.0,172.9 419.3,174.4C419.6,175.9 419.6,176.9 420.0,176.5C420.4,176.1 420.9,171.8 421.4,172.2C421.8,172.6 422.3,175.9 422.7,178.7C423.1,181.5 423.4,190.0 423.8,188.9C424.2,187.8 424.5,176.8 424.9,172.2C425.2,167.6 425.5,162.4 425.9,161.5C426.3,160.6 427.1,166.9 427.5,166.9C427.9,166.9 428.2,163.4 428.6,161.5C429.0,159.6 429.3,154.7 429.7,155.6C430.1,156.5 430.5,163.6 430.8,166.9C431.1,170.2 431.3,172.7 431.6,175.4C431.9,178.1 432.1,183.5 432.4,183.0C432.7,182.5 433.0,174.5 433.4,172.2C433.8,169.9 434.2,169.7 434.6,169.0C435.0,168.3 435.6,170.1 436.0,167.9C436.4,165.8 436.7,160.2 437.1,156.1C437.5,152.0 438.0,143.2 438.4,143.2C438.7,143.2 439.1,152.3 439.4,156.1C439.8,159.9 439.7,164.3 440.1,165.8C440.6,167.3 441.3,164.3 441.9,165.2C442.5,166.1 443.0,169.9 443.5,171.1C444.0,172.3 444.6,171.6 445.1,172.2C445.6,172.8 446.3,174.6 446.7,174.4C447.1,174.2 447.3,172.7 447.7,171.1C448.1,169.5 448.7,167.2 449.1,164.7C449.6,162.2 450.0,157.8 450.4,156.1C450.8,154.4 451.1,154.3 451.5,154.5C451.9,154.7 452.4,155.1 452.8,157.2C453.2,159.3 453.3,164.4 453.6,166.9C453.9,169.4 454.2,171.6 454.7,172.2C455.1,172.8 455.9,170.2 456.3,170.6C456.8,171.0 457.0,173.1 457.4,174.4C457.8,175.8 458.1,177.3 458.5,178.7C458.9,180.1 459.1,183.6 459.5,183.0C459.9,182.4 460.3,176.9 460.6,175.4C460.9,173.9 461.1,173.4 461.4,173.8C461.7,174.2 461.9,173.2 462.2,177.6C462.5,182.0 463.0,192.6 463.3,200.0C463.6,207.4 463.7,214.7 464.0,222.0C464.3,229.3 464.8,239.0 465.1,243.7C465.4,248.4 465.4,247.3 465.6,250.0C465.8,252.7 466.1,257.3 466.3,260.0C466.5,262.7 466.5,264.7 466.8,266.0C467.1,267.3 467.9,267.8 468.4,268.0C468.9,268.2 469.6,265.0 470.0,267.0C470.4,269.0 470.6,275.3 470.9,280.0C471.2,284.7 471.3,291.4 471.6,295.4C471.9,299.4 472.3,302.4 472.7,304.0C473.1,305.6 473.7,303.9 474.1,305.0C474.6,306.1 474.9,309.0 475.4,310.4C475.9,311.8 476.6,314.3 477.0,313.6C477.4,312.9 477.5,309.0 477.8,306.1C478.1,303.2 478.5,297.3 478.8,296.4C479.1,295.5 479.6,298.2 479.9,300.7C480.2,303.2 480.5,307.9 480.8,311.5C481.1,315.1 481.6,319.0 481.9,322.2C482.2,325.4 482.4,328.8 482.7,330.8C483.0,332.8 483.1,333.3 483.5,334.0C483.9,334.7 484.6,334.6 485.1,335.1C485.6,335.7 486.2,337.1 486.7,337.3C487.2,337.5 487.9,336.0 488.3,336.2C488.8,336.4 489.0,337.1 489.4,338.3C489.8,339.6 490.0,342.1 490.4,343.7C490.8,345.3 491.1,348.8 491.5,348.0C491.9,347.2 492.3,341.2 492.6,339.0C492.9,336.8 493.2,333.9 493.5,334.5C493.8,335.1 494.1,342.5 494.5,342.6C494.9,342.7 495.3,337.0 495.6,335.1C495.9,333.2 496.2,331.0 496.5,331.4C496.8,331.8 497.0,336.1 497.4,337.3C497.8,338.5 498.6,337.4 499.0,338.3C499.4,339.2 499.7,341.3 500.1,342.6C500.5,343.9 500.9,346.4 501.2,346.0C501.5,345.6 501.8,340.7 502.0,340.5C502.2,340.3 502.4,343.1 502.6,345.0C502.8,346.9 502.9,349.8 503.1,352.0C503.3,354.2 503.4,356.6 503.6,358.0C503.8,359.4 504.0,360.7 504.2,360.4C504.4,360.1 504.5,357.3 504.9,356.1C505.2,354.9 505.9,353.2 506.3,353.4C506.8,353.6 507.2,355.3 507.6,357.2C508.0,359.1 508.3,362.4 508.7,364.7C509.1,367.0 509.4,369.9 509.8,371.1C510.2,372.4 510.5,372.9 510.9,372.2C511.2,371.5 511.5,369.1 511.9,366.9C512.3,364.7 513.0,359.0 513.5,358.8C514.0,358.6 514.1,364.5 514.6,365.8C515.1,367.1 515.8,366.0 516.2,366.9C516.7,367.8 516.9,369.0 517.3,371.1C517.7,373.2 518.0,377.4 518.4,379.7C518.8,381.9 519.0,385.5 519.4,384.6C519.8,383.7 520.1,376.5 520.5,374.4C520.9,372.3 521.2,372.0 521.6,372.2C522.0,372.4 522.5,373.6 522.9,375.4C523.3,377.2 523.9,381.9 524.3,383.0C524.7,384.1 525.0,381.4 525.4,381.9C525.8,382.4 526.0,384.8 526.4,386.2C526.8,387.6 527.0,391.0 527.5,390.5C528.0,390.0 528.6,384.9 529.1,383.0C529.6,381.1 530.2,378.8 530.7,379.2C531.2,379.6 531.4,382.8 531.8,385.1C532.2,387.4 532.5,391.9 532.9,393.0C533.2,394.1 533.4,390.8 533.9,391.6C534.4,392.4 535.3,396.2 535.9,398.0C536.5,399.8 536.8,402.8 537.3,402.4C537.8,402.0 538.2,397.6 538.6,395.4C539.0,393.2 539.4,389.9 539.9,389.4C540.4,388.9 540.9,392.3 541.5,392.6C542.1,392.9 542.8,390.4 543.3,391.0C543.8,391.6 544.3,395.0 544.8,396.0C545.3,397.0 545.6,397.0 546.2,397.2C546.8,397.4 547.7,397.7 548.3,397.0C548.9,396.3 549.5,393.7 550.0,392.9C550.5,392.1 550.6,391.5 551.0,392.1C551.4,392.7 551.9,395.3 552.3,396.6C552.7,397.9 553.0,399.7 553.3,400.0C553.6,400.3 553.9,399.3 554.2,398.6C554.5,397.9 554.9,395.6 555.3,395.7C555.7,395.8 556.0,398.2 556.4,399.0C556.8,399.8 557.0,399.0 557.4,400.7C557.8,402.4 558.1,406.9 558.5,409.3C558.9,411.7 559.2,416.3 559.6,415.2C560.0,414.1 560.2,406.4 560.6,402.9C561.0,399.4 561.4,396.1 561.7,394.3C562.0,392.5 562.2,391.3 562.5,391.8C562.8,392.3 563.1,395.0 563.4,397.5C563.7,400.0 564.0,405.7 564.4,406.6C564.8,407.5 565.1,404.0 565.5,402.9C565.9,401.8 566.3,399.9 566.8,399.7C567.2,399.5 567.7,401.1 568.2,401.8C568.7,402.5 569.3,403.5 569.8,404.0C570.3,404.5 570.9,404.5 571.4,405.0C571.9,405.5 572.5,406.6 573.0,407.2C573.5,407.8 574.1,408.2 574.6,408.3C575.1,408.4 575.3,406.8 575.7,407.7C576.1,408.6 576.4,411.9 576.8,413.6C577.1,415.3 577.4,418.1 577.8,417.9C578.1,417.7 578.5,414.5 578.9,412.6C579.3,410.7 579.9,406.4 580.3,406.6C580.7,406.8 581.0,411.2 581.4,413.6C581.8,416.0 582.1,419.3 582.5,421.1C582.9,422.9 583.1,425.5 583.5,424.4C583.9,423.3 584.2,417.9 584.6,414.7C585.0,411.5 585.5,406.7 585.9,405.0C586.2,403.3 586.4,403.6 586.7,404.5C587.0,405.4 587.1,409.2 587.5,410.4C587.9,411.6 588.7,411.7 589.1,411.5C589.5,411.3 589.7,411.1 590.0,409.3C590.3,407.5 590.4,403.9 590.7,400.7C591.0,397.5 591.5,392.6 591.8,390.0C592.1,387.4 592.3,385.0 592.6,385.0C592.9,385.0 593.2,387.9 593.4,390.0C593.6,392.1 593.8,396.4 594.0,397.5C594.2,398.6 594.4,396.6 594.5,396.4" stroke="#fcaf3e"/>
<path d="M181.9,462.2C182.1,462.8 182.5,463.9 182.8,466.0C183.1,468.1 183.2,471.1 183.5,475.0C183.8,478.9 184.2,486.8 184.8,489.2C185.4,491.6 186.2,489.7 187.0,489.5C187.8,489.3 189.0,488.8 189.7,488.2C190.4,487.6 190.5,486.5 191.0,486.0C191.5,485.5 192.1,484.8 192.6,485.3C193.1,485.8 193.6,487.5 194.0,489.0C194.4,490.5 194.8,494.1 195.2,494.1C195.6,494.1 196.1,490.6 196.5,489.0C196.9,487.4 197.1,485.9 197.6,484.3C198.1,482.7 199.0,481.1 199.5,479.4C200.0,477.7 200.2,475.4 200.5,474.0C200.8,472.6 200.9,471.6 201.2,470.8C201.5,470.0 201.9,469.6 202.3,469.2C202.7,468.8 203.1,468.1 203.4,468.1C203.7,468.1 203.9,468.4 204.2,469.2C204.5,470.0 204.7,471.9 205.0,472.9C205.3,473.9 205.5,475.4 205.8,475.0C206.2,474.6 206.7,471.6 207.1,470.8C207.5,470.0 207.7,470.2 208.0,470.2C208.3,470.2 208.5,470.8 208.8,470.8C209.1,470.8 209.3,470.6 209.6,470.2C209.9,469.8 210.2,469.6 210.4,468.1C210.6,466.6 210.6,464.5 210.8,461.1C211.0,457.8 211.2,452.9 211.5,448.0C211.8,443.1 212.2,437.5 212.5,432.0C212.8,426.5 213.2,420.7 213.6,415.0C214.0,409.3 214.4,404.2 214.8,398.0C215.2,391.8 215.5,385.7 215.9,378.0C216.3,370.3 216.6,358.3 217.0,352.0C217.4,345.7 217.8,340.7 218.2,340.4C218.6,340.1 218.9,344.7 219.2,350.0C219.5,355.3 219.8,364.5 220.2,372.0C220.5,379.5 220.9,387.3 221.3,395.0C221.7,402.7 222.1,411.2 222.5,418.0C222.9,424.8 223.5,431.3 224.0,436.0C224.5,440.7 225.0,443.4 225.4,446.0C225.8,448.6 226.1,449.9 226.5,451.5C226.9,453.1 227.6,455.3 228.1,455.8C228.6,456.3 229.2,454.4 229.7,454.7C230.1,455.0 230.4,456.1 230.8,457.9C231.2,459.7 231.6,463.1 231.9,465.4C232.2,467.7 232.6,472.4 232.9,471.9C233.2,471.4 233.7,466.5 234.0,462.2C234.3,457.9 234.7,451.8 234.9,446.1C235.2,440.4 235.2,433.2 235.5,428.0C235.8,422.8 236.1,416.3 236.4,414.6C236.7,412.9 237.0,416.8 237.3,418.0C237.6,419.2 238.0,421.7 238.3,421.6C238.7,421.5 239.1,417.0 239.4,417.3C239.8,417.6 240.1,421.6 240.4,423.7C240.8,425.8 241.1,427.2 241.5,430.0C241.9,432.8 242.6,437.1 243.1,440.7C243.6,444.3 244.1,447.9 244.7,451.5C245.2,455.1 245.9,459.4 246.4,462.2C246.9,465.0 247.4,467.7 247.8,468.1C248.2,468.5 248.5,465.2 249.0,464.4C249.5,463.6 250.2,464.6 250.7,463.3C251.1,462.1 251.3,459.8 251.7,456.9C252.0,454.0 252.4,448.8 252.8,446.1C253.2,443.4 253.6,441.2 253.9,440.7C254.2,440.2 254.6,443.6 254.9,442.9C255.2,442.2 255.7,438.5 256.0,436.4C256.3,434.2 256.5,432.3 256.8,430.0C257.1,427.7 257.3,422.6 257.6,422.6C257.9,422.6 258.3,427.1 258.7,430.0C259.1,432.9 259.4,437.7 259.8,440.0C260.2,442.3 260.6,443.8 261.0,444.0C261.4,444.2 261.9,443.0 262.3,441.0C262.7,439.0 263.1,435.2 263.5,432.0C263.9,428.8 264.3,422.6 264.6,421.6C264.9,420.6 265.2,424.6 265.5,426.0C265.8,427.4 265.9,427.6 266.2,430.0C266.5,432.4 266.8,437.1 267.1,440.7C267.4,444.3 267.8,450.1 268.2,451.5C268.6,452.9 268.9,451.4 269.4,449.3C269.9,447.2 270.7,440.0 271.1,438.6C271.6,437.2 271.8,438.6 272.1,440.7C272.5,442.8 272.8,448.4 273.2,451.5C273.6,454.6 273.9,457.4 274.3,459.0C274.8,460.6 275.4,460.6 275.9,461.1C276.3,461.6 276.6,460.6 277.0,462.2C277.4,463.8 277.6,468.5 278.0,470.8C278.4,473.1 278.9,475.8 279.3,476.2C279.8,476.6 280.2,473.4 280.7,473.0C281.2,472.6 281.9,473.3 282.3,474.0C282.8,474.7 282.8,474.6 283.4,477.3C284.0,480.0 285.3,486.4 286.0,490.0C286.7,493.6 287.1,499.1 287.6,499.1C288.1,499.1 288.7,492.9 289.2,490.0C289.7,487.1 290.3,481.6 290.8,481.6C291.3,481.6 291.9,487.6 292.4,490.0C292.9,492.4 293.5,496.2 294.0,496.0C294.5,495.8 294.9,491.4 295.3,489.0C295.7,486.6 296.1,481.4 296.5,481.6C296.9,481.8 297.3,487.4 297.8,490.0C298.3,492.6 298.9,497.0 299.4,497.0C299.9,497.0 300.5,492.8 301.0,490.0C301.5,487.2 301.9,482.8 302.3,480.0C302.8,477.2 303.1,472.6 303.7,473.0C304.3,473.4 305.1,482.6 305.9,482.6C306.7,482.6 308.0,476.8 308.6,473.0C309.2,469.2 309.1,465.5 309.5,460.0C309.9,454.5 310.3,450.0 311.0,440.0C311.7,430.0 312.8,410.8 313.5,400.0C314.2,389.2 314.8,380.3 315.5,375.0C316.2,369.7 316.9,370.8 317.5,368.0C318.1,365.2 318.6,361.0 319.0,358.0C319.4,355.0 319.4,352.0 319.6,350.0C319.8,348.0 320.1,347.2 320.4,345.8C320.7,344.4 321.1,342.7 321.5,341.5C321.9,340.3 322.2,340.2 322.6,338.8C323.0,337.4 323.3,334.8 323.6,333.4C323.9,332.0 324.1,332.0 324.4,330.7C324.7,329.4 325.0,327.2 325.2,325.4C325.4,323.6 325.5,322.7 325.8,320.0C326.1,317.3 326.5,312.2 326.8,309.0C327.1,305.8 327.5,302.2 327.8,300.5C328.1,298.8 328.4,296.1 328.7,298.5C329.0,300.9 329.2,308.9 329.5,315.0C329.8,321.1 330.1,329.5 330.3,335.0C330.6,340.5 330.8,344.8 331.0,348.0C331.2,351.2 331.5,353.7 331.7,354.0C331.9,354.3 331.9,352.1 332.2,350.0C332.5,347.9 332.9,344.3 333.3,341.5C333.7,338.7 334.1,335.6 334.4,333.4C334.7,331.2 334.7,329.8 334.9,328.1C335.1,326.4 335.2,324.3 335.4,323.2C335.6,322.1 335.8,321.6 336.0,321.6C336.2,321.6 336.3,322.7 336.5,323.2C336.7,323.7 337.0,324.9 337.3,324.8C337.6,324.7 337.9,323.5 338.1,322.7C338.3,321.9 338.5,320.8 338.7,320.0C338.9,319.2 339.0,318.0 339.2,318.0C339.4,318.0 339.4,319.2 339.6,320.0C339.8,320.8 340.1,322.7 340.3,322.7C340.5,322.7 340.6,321.8 340.8,320.0C341.0,318.2 341.1,314.5 341.5,312.0C341.9,309.5 342.6,306.2 343.2,305.0C343.8,303.8 344.5,310.5 345.2,305.0C345.9,299.5 346.9,278.5 347.5,272.0C348.1,265.5 348.6,267.9 349.0,266.0C349.4,264.1 349.5,262.5 349.8,260.7C350.1,258.9 350.3,257.2 350.6,255.4C350.9,253.6 351.4,251.7 351.7,250.0C352.0,248.3 352.3,246.9 352.7,245.5C353.1,244.1 353.4,242.8 353.8,241.6C354.2,240.4 354.5,238.0 354.9,238.3C355.3,238.7 355.6,242.3 356.0,243.7C356.4,245.1 356.8,247.2 357.1,246.9C357.5,246.6 357.8,244.1 358.1,241.6C358.5,239.1 358.8,233.9 359.2,231.9C359.6,229.9 359.9,229.3 360.3,229.7C360.7,230.0 361.0,232.6 361.4,234.0C361.8,235.4 362.0,236.9 362.4,238.3C362.8,239.7 363.1,241.5 363.5,242.6C363.9,243.7 364.2,245.0 364.6,244.8C365.1,244.6 365.8,243.6 366.2,241.6C366.6,239.6 366.9,235.7 367.3,233.0C367.8,230.3 368.4,226.8 368.9,225.4C369.4,224.0 370.1,225.1 370.5,224.4C370.9,223.7 371.2,222.0 371.6,221.1C372.1,220.2 372.7,219.2 373.2,219.0C373.7,218.8 374.4,221.3 374.8,220.1C375.2,218.8 375.6,214.8 375.9,211.5C376.2,208.2 376.4,203.8 376.6,200.0C376.8,196.2 376.9,191.4 377.1,188.8C377.3,186.2 377.5,184.5 377.7,184.5C377.9,184.5 378.0,187.2 378.2,188.8C378.4,190.4 378.7,192.5 379.0,194.2C379.3,195.9 379.4,197.7 379.8,199.0C380.2,200.3 380.8,201.6 381.2,201.8C381.6,202.0 381.7,200.8 382.0,200.0C382.3,199.2 382.8,198.3 383.1,196.9C383.5,195.5 383.8,192.6 384.1,191.5C384.4,190.4 384.5,190.0 384.7,190.4C384.9,190.8 385.2,193.7 385.5,194.2C385.8,194.7 386.0,193.3 386.3,193.6C386.6,193.9 387.1,195.4 387.5,196.0C387.9,196.6 388.4,197.8 388.8,197.0C389.2,196.2 389.5,192.8 389.8,191.0C390.1,189.2 390.3,187.6 390.6,186.1C390.9,184.6 391.1,182.8 391.4,181.8C391.7,180.8 391.9,179.9 392.2,180.2C392.5,180.5 392.7,182.4 393.0,183.4C393.3,184.4 393.5,185.0 393.8,186.1C394.1,187.2 394.6,190.0 395.0,190.0C395.4,190.0 396.1,187.3 396.5,186.1C396.9,184.9 397.3,183.7 397.6,182.9C397.9,182.1 398.1,181.0 398.4,181.5C398.7,182.0 399.0,183.6 399.3,186.0C399.6,188.4 399.8,192.7 400.0,196.0C400.2,199.3 400.4,205.7 400.6,206.0C400.8,206.3 401.0,200.7 401.3,198.0C401.6,195.3 401.8,192.0 402.2,190.0C402.6,188.0 403.1,187.5 403.5,186.1C403.9,184.7 404.1,181.9 404.3,181.5C404.5,181.1 404.6,182.2 404.8,183.4C405.0,184.6 405.1,187.0 405.3,188.8C405.5,190.6 406.0,193.0 406.2,194.2C406.4,195.4 406.5,196.2 406.7,195.8C406.9,195.4 407.0,192.9 407.2,191.5C407.4,190.1 407.6,187.6 407.8,187.2C408.0,186.8 408.1,187.9 408.3,188.8C408.5,189.7 408.6,191.4 408.8,192.6C409.0,193.8 409.2,196.0 409.4,195.8C409.6,195.6 410.0,192.4 410.2,191.5C410.4,190.6 410.5,189.8 410.7,190.4C410.9,191.0 411.2,192.7 411.5,195.0C411.8,197.3 412.1,203.5 412.4,204.0C412.7,204.5 412.9,199.6 413.1,198.0C413.3,196.4 413.5,195.7 413.7,194.2C413.9,192.7 414.3,190.6 414.5,188.8C414.7,187.0 414.8,184.9 415.0,183.4C415.2,181.9 415.6,180.5 415.8,179.7C416.0,178.9 416.2,178.4 416.4,178.6C416.6,178.8 416.9,179.9 417.2,180.7C417.5,181.5 417.7,183.4 418.0,183.4C418.3,183.4 418.5,181.6 418.8,180.7C419.1,179.8 419.3,178.7 419.6,178.1C419.9,177.5 420.1,177.2 420.4,177.0C420.7,176.8 420.9,176.4 421.2,177.0C421.5,177.6 422.0,179.2 422.3,180.7C422.6,182.2 422.9,184.3 423.1,186.1C423.3,187.9 423.4,191.5 423.6,191.5C423.8,191.5 424.1,187.9 424.4,186.1C424.7,184.3 425.0,182.0 425.2,180.7C425.4,179.4 425.6,177.6 425.8,178.1C426.0,178.6 426.1,182.1 426.3,183.4C426.5,184.7 426.6,186.1 426.8,186.1C427.0,186.1 427.4,184.7 427.6,183.4C427.8,182.1 428.0,179.4 428.2,178.1C428.4,176.8 428.4,175.3 428.7,175.4C429.0,175.5 429.7,176.0 430.2,178.7C430.7,181.4 431.1,191.2 431.6,191.6C432.1,191.9 432.7,181.9 433.2,180.8C433.7,179.7 434.4,186.0 434.8,185.1C435.2,184.2 435.5,178.4 435.9,175.4C436.3,172.4 436.6,169.9 437.0,166.9C437.4,163.9 438.0,157.7 438.4,157.7C438.8,157.7 439.1,163.9 439.5,166.9C439.9,169.9 440.2,173.8 440.7,175.4C441.2,177.0 441.8,176.8 442.4,176.5C442.9,176.2 443.5,175.0 444.0,173.3C444.5,171.6 445.2,166.5 445.6,166.3C446.0,166.1 446.2,168.9 446.6,172.2C447.0,175.5 447.3,183.5 447.7,186.2C448.1,188.9 448.4,188.8 448.8,188.3C449.2,187.8 449.9,185.2 450.4,183.0C450.9,180.8 451.6,175.8 452.0,175.4C452.4,175.0 452.7,178.8 453.1,180.8C453.5,182.8 453.8,185.8 454.2,187.3C454.6,188.8 455.4,190.6 455.8,189.9C456.2,189.2 456.4,183.8 456.9,183.0C457.3,182.2 458.1,185.8 458.5,185.1C458.9,184.4 459.1,179.9 459.5,178.7C459.9,177.4 460.2,176.5 460.6,177.6C461.0,178.7 461.4,181.4 461.7,185.1C462.0,188.8 462.3,193.3 462.6,200.0C462.9,206.7 463.3,217.5 463.6,225.0C463.9,232.5 464.2,238.8 464.6,245.0C465.0,251.2 465.4,257.5 466.0,262.0C466.6,266.5 467.3,269.0 468.0,272.0C468.7,275.0 469.2,273.4 470.0,280.0C470.8,286.6 472.1,304.8 472.7,311.5C473.3,318.2 473.4,317.6 473.8,320.1C474.2,322.6 474.5,324.7 474.9,326.5C475.2,328.3 475.5,330.6 475.9,330.8C476.2,331.0 476.6,330.8 477.0,327.6C477.4,324.4 477.7,316.0 478.1,311.5C478.5,307.0 478.9,301.8 479.2,300.7C479.5,299.6 479.6,302.3 479.9,305.0C480.2,307.7 480.5,313.1 480.8,316.9C481.1,320.7 481.5,324.9 481.9,327.6C482.3,330.3 482.7,331.9 483.1,333.0C483.5,334.1 484.1,334.0 484.5,334.0C484.9,334.0 485.2,331.9 485.6,333.0C486.0,334.1 486.4,337.9 486.7,340.5C487.0,343.1 486.9,347.6 487.2,348.6C487.5,349.6 487.9,346.0 488.3,346.4C488.7,346.8 489.0,349.1 489.4,350.7C489.8,352.3 490.0,354.3 490.4,356.1C490.8,357.9 491.2,361.3 491.7,361.5C492.1,361.7 492.6,358.1 493.1,357.2C493.6,356.3 494.1,356.1 494.7,356.1C495.2,356.1 495.9,357.7 496.4,357.2C496.8,356.7 497.0,354.9 497.4,352.9C497.8,350.9 498.2,347.4 498.5,345.4C498.8,343.4 499.1,341.4 499.3,341.0C499.6,340.6 499.8,342.2 500.0,343.0C500.2,343.8 500.3,344.3 500.6,346.0C500.9,347.7 501.3,350.4 501.7,353.0C502.1,355.6 502.4,358.5 502.8,361.5C503.2,364.5 503.5,369.1 503.9,371.1C504.2,373.1 504.5,373.5 504.9,373.3C505.2,373.1 505.6,370.1 506.0,370.1C506.4,370.1 507.1,372.4 507.6,373.3C508.1,374.2 508.6,374.7 509.2,375.4C509.8,376.1 510.3,377.6 510.9,377.6C511.4,377.6 512.0,375.8 512.5,375.4C513.0,375.0 513.4,374.7 513.9,375.4C514.4,376.1 514.7,379.1 515.2,379.7C515.7,380.2 516.4,377.8 516.8,378.7C517.2,379.6 517.4,382.6 517.8,385.1C518.1,387.6 518.6,391.7 518.9,393.7C519.2,395.7 519.1,398.1 519.4,396.9C519.7,395.6 520.0,388.9 520.5,386.2C521.0,383.5 521.6,381.3 522.1,380.8C522.6,380.3 523.2,382.8 523.7,383.0C524.2,383.2 525.0,381.2 525.4,381.9C525.8,382.6 526.1,384.5 526.4,387.3C526.7,390.1 527.1,395.9 527.4,398.6C527.7,401.3 528.0,403.8 528.4,403.4C528.8,403.0 529.1,397.9 529.5,396.4C529.9,394.9 530.2,394.3 530.6,394.3C531.0,394.3 531.1,395.8 531.6,396.4C532.1,397.0 533.1,397.4 533.8,398.0C534.5,398.6 535.3,399.2 535.9,399.7C536.5,400.1 537.0,401.2 537.6,400.7C538.2,400.1 538.7,396.2 539.2,396.4C539.7,396.6 540.3,400.0 540.8,401.8C541.3,403.6 541.9,406.5 542.4,407.2C542.9,407.9 543.5,406.1 544.0,406.1C544.5,406.1 544.8,407.7 545.1,407.2C545.5,406.7 545.7,404.1 546.1,402.9C546.5,401.7 547.2,399.8 547.8,400.2C548.3,400.6 549.0,403.9 549.4,405.0C549.8,406.1 549.9,406.5 550.4,406.6C550.9,406.7 551.5,406.0 552.1,405.6C552.7,405.2 553.2,403.9 553.7,404.0C554.2,404.1 554.8,405.2 555.3,406.1C555.8,407.0 556.0,408.2 556.4,409.3C556.8,410.4 557.0,411.5 557.4,412.6C557.8,413.7 558.5,416.0 559.0,415.8C559.5,415.6 559.7,413.1 560.1,411.5C560.5,409.9 560.8,407.6 561.2,406.1C561.7,404.6 562.3,401.3 562.8,402.4C563.2,403.5 563.5,409.8 563.9,412.6C564.2,415.4 564.5,417.8 564.9,419.0C565.2,420.2 565.6,420.3 566.0,420.1C566.4,419.9 566.7,418.8 567.1,417.9C567.5,417.0 567.8,415.8 568.2,414.7C568.6,413.6 569.2,411.3 569.6,411.5C570.0,411.7 570.5,414.4 570.9,415.8C571.3,417.2 571.5,418.7 571.9,420.1C572.2,421.5 572.6,422.6 573.0,424.4C573.4,426.2 573.8,429.5 574.1,430.8C574.4,432.1 574.6,433.1 574.9,432.4C575.2,431.7 575.6,428.2 576.0,426.5C576.4,424.8 576.9,423.3 577.3,422.2C577.7,421.1 578.0,421.0 578.4,420.1C578.8,419.2 579.0,417.8 579.4,416.9C579.8,416.0 580.1,414.5 580.5,414.7C580.9,414.9 581.2,416.5 581.6,417.9C582.0,419.3 582.4,422.1 582.7,423.3C583.1,424.6 583.4,425.6 583.7,425.4C584.1,425.2 584.3,423.1 584.8,422.2C585.2,421.3 585.9,420.3 586.4,420.1C586.9,419.9 587.5,420.8 588.0,421.1C588.5,421.5 589.2,423.8 589.7,422.2C590.2,420.6 590.4,414.4 590.7,411.5C591.1,408.6 591.5,406.2 591.8,405.0C592.1,403.8 592.1,404.8 592.3,404.0C592.5,403.2 592.9,400.2 593.2,400.0C593.5,399.8 594.1,402.5 594.3,403.0" stroke="#fce94f"/>
<path d="M180.8,488.2C180.9,491.0 181.2,499.7 181.5,505.0C181.8,510.3 182.0,515.4 182.3,520.0C182.6,524.6 182.9,531.7 183.3,532.4C183.7,533.1 184.1,526.4 184.6,524.0C185.1,521.6 185.7,518.6 186.2,518.1C186.7,517.6 187.2,519.2 187.8,521.1C188.4,523.0 189.2,529.1 189.7,529.7C190.2,530.3 190.5,524.8 191.0,524.9C191.5,525.0 192.1,527.9 192.6,530.3C193.1,532.6 193.6,536.3 194.0,539.0C194.4,541.7 194.9,546.4 195.3,546.4C195.7,546.4 196.1,541.2 196.5,539.0C196.9,536.8 197.1,533.8 197.5,533.0C197.9,532.2 198.5,534.5 199.1,534.0C199.7,533.5 200.4,532.4 201.2,530.3C202.0,528.1 203.1,524.6 203.9,521.1C204.7,517.6 205.4,512.4 205.9,509.3C206.4,506.2 206.6,503.1 207.1,502.4C207.6,501.7 208.3,504.9 208.8,505.0C209.3,505.1 209.9,505.5 210.2,503.0C210.5,500.5 210.5,495.0 210.7,490.0C210.9,485.0 211.1,478.3 211.4,473.0C211.7,467.7 212.0,461.6 212.3,458.0C212.6,454.4 213.0,452.9 213.3,451.4C213.6,449.9 213.7,452.6 213.9,449.0C214.1,445.4 214.1,437.3 214.3,430.0C214.5,422.7 214.8,413.4 215.0,405.0C215.2,396.6 215.4,387.7 215.7,379.4C216.0,371.1 216.2,361.0 216.6,355.0C216.9,349.0 217.4,344.2 217.8,343.3C218.2,342.4 218.5,343.8 218.8,349.8C219.1,355.8 219.3,369.5 219.6,379.4C219.9,389.2 220.2,400.5 220.5,408.9C220.8,417.3 221.0,424.7 221.3,430.0C221.6,435.3 221.9,436.2 222.2,440.7C222.4,445.2 222.6,451.5 222.8,456.9C223.0,462.3 223.2,468.9 223.6,473.0C223.9,477.1 224.5,479.3 224.9,481.6C225.3,483.9 225.5,485.5 225.9,486.9C226.3,488.3 227.0,488.8 227.6,490.0C228.2,491.2 228.8,492.3 229.3,494.0C229.8,495.7 230.4,496.9 230.8,500.2C231.2,503.5 231.7,510.0 232.0,514.0C232.3,518.0 232.6,524.6 232.9,524.2C233.2,523.8 233.6,517.2 233.9,511.5C234.2,505.8 234.4,498.2 234.7,490.0C235.0,481.8 235.2,467.4 235.5,462.2C235.8,456.9 236.2,459.9 236.7,458.5C237.2,457.1 237.9,456.0 238.3,453.6C238.8,451.2 239.1,445.7 239.4,444.0C239.7,442.3 239.8,442.1 240.1,443.4C240.4,444.6 240.7,447.5 241.0,451.5C241.3,455.5 241.4,463.1 241.7,467.6C241.9,472.1 242.3,474.6 242.5,478.3C242.7,482.0 242.8,485.9 243.1,490.0C243.4,494.1 244.1,499.4 244.6,503.0C245.1,506.6 245.3,507.7 245.8,511.5C246.3,515.3 247.2,525.1 247.7,526.0C248.2,526.9 248.6,517.6 249.0,516.9C249.4,516.2 249.9,522.6 250.3,521.7C250.7,520.8 250.9,516.8 251.2,511.5C251.5,506.2 252.0,496.4 252.3,490.0C252.7,483.6 253.0,476.2 253.3,473.0C253.7,469.8 254.0,471.9 254.4,470.8C254.8,469.7 255.1,468.5 255.5,466.5C255.9,464.5 256.3,462.4 256.6,459.0C256.9,455.6 256.9,449.5 257.1,446.1C257.3,442.7 257.5,437.7 257.8,438.6C258.1,439.5 258.4,446.7 258.7,451.5C259.0,456.3 259.3,463.6 259.6,467.6C259.9,471.6 260.0,476.1 260.3,475.7C260.6,475.3 261.0,468.0 261.4,465.5C261.8,463.0 262.1,460.2 262.5,460.6C262.9,461.0 263.1,465.5 263.5,467.6C263.9,469.7 264.3,471.4 264.6,473.0C264.9,474.6 265.1,474.5 265.4,477.3C265.7,480.1 265.8,485.7 266.2,490.0C266.6,494.3 267.3,502.9 267.8,502.9C268.3,502.9 268.8,492.6 269.2,490.0C269.6,487.4 270.1,488.9 270.5,487.0C270.9,485.1 271.3,478.5 271.6,478.3C271.9,478.1 271.9,482.9 272.1,485.9C272.3,488.9 272.4,493.4 272.7,496.4C273.0,499.4 273.2,502.6 273.7,504.0C274.1,505.4 274.8,503.8 275.4,505.0C275.9,506.2 276.6,508.6 277.0,511.5C277.4,514.4 277.6,519.4 278.0,522.2C278.4,525.0 278.9,527.7 279.3,528.1C279.8,528.5 280.2,524.6 280.7,524.4C281.2,524.2 281.8,526.4 282.3,527.1C282.8,527.8 283.4,527.7 283.9,528.7C284.3,529.7 284.6,531.6 285.0,533.0C285.4,534.4 285.5,534.7 286.0,537.0C286.5,539.3 287.3,547.9 287.9,546.9C288.5,545.9 289.2,534.9 289.8,530.8C290.4,526.7 290.9,522.7 291.2,522.2C291.5,521.7 291.5,525.2 291.9,527.6C292.3,530.0 292.8,535.9 293.5,536.7C294.2,537.5 295.5,532.9 296.2,532.4C296.9,531.9 297.3,532.9 297.8,534.0C298.3,535.1 298.9,540.9 299.4,538.9C299.9,536.9 300.6,525.2 301.0,522.2C301.4,519.2 301.7,524.2 302.1,521.1C302.5,518.0 302.9,505.9 303.2,503.4C303.5,500.9 303.6,501.6 304.0,506.1C304.4,510.6 304.8,529.7 305.3,530.6C305.8,531.5 306.3,516.8 306.9,511.5C307.4,506.2 308.2,503.0 308.6,498.6C309.0,494.2 309.2,491.4 309.4,485.0C309.6,478.6 309.8,466.7 310.0,460.0C310.2,453.3 310.4,449.7 310.7,445.0C311.0,440.3 311.3,436.4 311.6,432.0C311.9,427.6 312.4,424.0 312.7,418.7C313.0,413.4 313.4,405.2 313.7,400.0C314.0,394.8 314.4,387.9 314.7,387.2C315.0,386.5 315.4,393.0 315.7,396.0C316.0,399.0 316.4,406.3 316.7,405.0C317.0,403.7 317.3,393.9 317.6,388.0C317.9,382.1 318.1,372.6 318.6,369.5C319.1,366.4 320.2,371.4 320.6,369.5C321.0,367.6 321.0,361.8 321.2,358.0C321.4,354.2 321.5,350.2 321.6,347.0C321.8,343.8 321.9,340.6 322.1,338.8C322.3,337.0 322.4,335.8 322.6,336.1C322.8,336.4 322.9,339.1 323.1,340.4C323.3,341.6 323.4,343.4 323.6,343.6C323.8,343.8 324.0,342.8 324.2,341.5C324.4,340.2 324.5,337.9 324.7,336.1C324.9,334.3 325.0,332.5 325.2,330.7C325.4,328.9 325.6,328.0 325.8,325.4C326.0,322.8 326.2,318.0 326.5,314.8C326.8,311.6 327.2,308.0 327.5,306.0C327.8,304.0 328.1,300.7 328.4,303.0C328.6,305.3 328.8,315.4 329.0,320.0C329.2,324.6 329.3,327.1 329.5,330.7C329.7,334.3 329.9,338.3 330.1,341.5C330.3,344.7 330.3,345.8 330.6,350.0C330.9,354.2 331.5,365.3 331.9,366.6C332.2,367.9 332.5,360.8 332.7,358.0C332.9,355.2 333.1,352.8 333.3,350.0C333.5,347.2 333.8,344.3 334.1,341.5C334.4,338.7 334.7,335.3 334.9,333.4C335.1,331.5 335.1,330.8 335.4,330.2C335.7,329.6 336.1,330.2 336.5,329.9C336.9,329.5 337.3,328.1 337.6,328.1C337.9,328.1 338.2,328.4 338.4,329.7C338.6,331.0 338.6,333.7 338.7,336.1C338.8,338.5 339.0,341.9 339.2,344.2C339.4,346.5 339.5,348.5 339.7,350.0C339.9,351.5 340.2,353.0 340.4,353.0C340.6,353.0 340.9,351.9 341.1,350.0C341.3,348.1 341.4,344.7 341.6,341.5C341.8,338.3 342.0,333.8 342.2,330.7C342.4,327.6 342.5,325.6 342.7,322.7C342.9,319.8 343.0,316.9 343.4,313.0C343.8,309.1 344.6,304.0 345.1,299.3C345.7,294.6 346.4,289.8 346.7,284.8C347.0,279.8 346.9,272.3 347.2,269.5C347.5,266.7 348.0,268.6 348.4,268.0C348.8,267.4 349.2,265.9 349.6,266.0C350.0,266.1 350.3,267.7 350.6,268.5C350.9,269.3 351.2,271.8 351.5,270.7C351.8,269.6 352.0,265.4 352.2,262.0C352.4,258.6 352.5,253.2 352.7,250.0C352.9,246.8 353.0,244.7 353.4,242.6C353.8,240.5 354.3,238.8 354.9,237.3C355.5,235.8 356.6,234.2 357.1,233.5C357.6,232.8 357.8,232.6 358.1,233.0C358.5,233.4 358.9,235.4 359.2,236.2C359.5,237.0 359.6,238.3 360.0,237.8C360.4,237.3 361.0,234.2 361.4,233.0C361.8,231.8 362.0,230.8 362.4,230.8C362.8,230.8 363.1,233.5 363.5,233.0C363.9,232.5 364.6,229.2 365.1,227.6C365.6,226.0 366.2,223.8 366.7,223.3C367.1,222.8 367.4,223.7 367.8,224.4C368.2,225.1 368.5,226.2 368.9,227.6C369.2,229.0 369.5,231.4 369.9,233.0C370.3,234.6 370.9,237.5 371.3,237.3C371.8,237.1 372.2,233.0 372.6,231.9C373.0,230.8 373.3,230.3 373.7,230.8C374.1,231.3 374.6,235.6 375.0,235.1C375.4,234.6 375.7,231.5 375.9,227.6C376.1,223.7 376.2,216.7 376.4,211.5C376.6,206.3 376.7,199.6 376.9,196.4C377.1,193.2 377.3,192.5 377.6,192.6C377.9,192.7 378.4,194.0 378.7,197.0C379.0,200.0 379.3,207.5 379.6,210.4C379.9,213.3 380.2,214.7 380.5,214.7C380.8,214.7 380.9,211.4 381.2,210.4C381.5,209.4 381.9,209.9 382.3,208.8C382.8,207.7 383.4,207.4 383.9,204.0C384.4,200.6 384.7,191.9 385.1,188.3C385.5,184.7 386.0,181.9 386.4,182.4C386.8,182.9 387.0,189.9 387.3,191.6C387.6,193.3 387.9,192.8 388.3,192.6C388.7,192.4 389.3,191.8 389.9,190.5C390.4,189.2 391.2,186.2 391.6,185.1C392.1,184.0 392.3,182.9 392.6,184.0C392.9,185.1 393.1,188.4 393.4,191.6C393.7,194.8 393.9,198.9 394.2,203.0C394.5,207.1 394.9,216.3 395.2,216.3C395.5,216.3 395.8,208.0 396.1,203.0C396.4,198.0 396.6,189.4 396.9,186.2C397.2,183.0 397.7,183.1 398.0,184.0C398.3,184.9 398.6,188.8 398.9,191.6C399.2,194.4 399.7,198.5 400.0,200.7C400.3,202.8 400.4,204.8 400.8,204.5C401.2,204.2 401.8,200.0 402.2,198.6C402.6,197.2 402.9,195.8 403.4,195.9C403.9,196.0 404.9,197.6 405.4,199.0C405.9,200.4 406.1,204.5 406.5,204.5C406.9,204.5 407.4,200.9 407.8,199.0C408.2,197.1 408.5,195.1 408.8,193.0C409.1,190.9 409.4,188.1 409.8,186.2C410.2,184.3 410.9,181.9 411.4,181.4C411.9,180.9 412.6,182.2 413.0,183.0C413.4,183.8 413.7,184.9 414.1,186.2C414.5,187.4 415.0,188.1 415.4,190.5C415.8,192.9 416.2,197.7 416.7,200.7C417.2,203.7 417.9,208.8 418.3,208.3C418.7,207.9 419.0,203.1 419.2,198.0C419.4,192.9 419.5,182.8 419.7,177.6C419.9,172.4 420.3,169.0 420.6,166.9C420.9,164.8 421.1,163.8 421.4,165.2C421.7,166.6 422.0,172.4 422.2,175.4C422.4,178.4 422.4,182.1 422.7,183.0C423.0,183.9 423.4,179.5 423.8,180.8C424.2,182.1 424.5,188.0 424.8,191.0C425.1,194.0 425.5,196.3 425.9,198.6C426.3,200.9 426.9,205.4 427.3,205.0C427.7,204.6 428.0,200.1 428.2,196.4C428.4,192.7 428.4,186.7 428.7,183.0C428.9,179.3 429.3,174.4 429.7,174.4C430.1,174.4 430.5,180.0 430.8,183.0C431.1,186.0 431.2,190.4 431.5,192.6C431.8,194.8 432.2,196.2 432.6,195.9C433.0,195.6 433.6,191.8 434.0,190.5C434.4,189.2 434.8,190.5 435.1,188.3C435.5,186.2 435.8,181.0 436.1,177.6C436.5,174.2 436.8,170.0 437.2,167.9C437.6,165.8 438.0,163.9 438.4,165.2C438.8,166.4 439.2,172.1 439.5,175.4C439.8,178.7 439.9,183.2 440.2,185.1C440.5,187.0 441.0,184.7 441.4,187.0C441.8,189.3 442.1,196.6 442.4,199.0C442.7,201.4 443.1,201.5 443.4,201.3C443.7,201.1 444.1,200.7 444.3,198.0C444.5,195.3 444.6,187.8 444.8,185.1C445.0,182.4 445.4,181.4 445.7,181.9C446.0,182.4 446.4,186.6 446.7,188.3C447.0,190.0 447.3,189.9 447.6,192.0C447.9,194.1 448.1,196.3 448.5,200.7C448.9,205.1 449.5,218.5 449.9,218.5C450.2,218.5 450.4,208.4 450.6,200.7C450.8,193.0 450.7,178.3 450.9,172.2C451.1,166.1 451.6,164.2 452.0,164.2C452.4,164.2 452.8,168.2 453.1,172.2C453.4,176.2 453.6,183.6 453.8,188.3C454.0,193.1 454.2,198.5 454.4,200.7C454.6,202.9 454.9,202.0 455.2,201.3C455.5,200.6 456.0,197.9 456.4,196.4C456.8,194.9 457.0,193.8 457.4,192.5C457.8,191.2 458.2,187.9 458.5,188.3C458.8,188.7 459.1,193.5 459.3,195.0C459.5,196.5 459.6,197.9 459.8,197.5C460.0,197.1 460.3,194.0 460.6,192.5C460.9,191.0 461.2,188.4 461.4,188.3C461.6,188.2 461.8,190.1 462.0,192.0C462.2,193.9 462.2,195.0 462.4,200.0C462.6,205.0 462.8,213.9 463.0,222.2C463.2,230.5 463.3,243.4 463.5,250.0C463.7,256.6 463.8,255.1 464.1,261.5C464.4,267.9 464.9,281.9 465.2,288.3C465.5,294.7 465.3,298.0 465.7,299.7C466.1,301.4 467.0,297.5 467.4,298.6C467.8,299.7 467.6,303.8 467.9,306.1C468.2,308.4 468.6,311.4 469.0,312.6C469.4,313.9 470.2,310.2 470.6,313.6C471.0,317.0 470.8,326.8 471.1,333.0C471.4,339.2 471.8,346.7 472.2,350.7C472.6,354.7 473.4,355.4 473.8,357.2C474.2,359.0 474.0,360.0 474.3,361.5C474.6,363.0 475.2,367.2 475.6,366.3C476.1,365.4 476.6,360.5 477.0,356.1C477.4,351.7 477.5,345.1 477.8,340.0C478.1,334.9 478.5,326.7 478.8,325.4C479.1,324.1 479.5,329.6 479.8,332.0C480.1,334.4 480.5,335.1 480.8,340.0C481.1,344.9 481.5,355.6 481.9,361.5C482.2,367.4 482.6,372.2 482.9,375.4C483.2,378.6 483.4,379.5 483.8,380.8C484.2,382.1 484.8,381.9 485.1,383.0C485.5,384.1 485.5,387.1 485.9,387.3C486.2,387.5 486.7,384.4 487.2,384.0C487.7,383.6 488.4,384.6 488.8,385.1C489.2,385.7 489.5,386.2 489.9,387.3C490.3,388.4 490.6,390.1 491.0,391.6C491.4,393.1 491.9,395.9 492.4,396.4C492.8,396.9 493.3,396.1 493.7,394.8C494.1,393.5 494.3,390.3 494.7,388.3C495.1,386.3 495.4,383.0 495.8,383.0C496.2,383.0 496.6,386.5 496.9,388.3C497.2,390.1 497.1,394.6 497.4,393.7C497.7,392.8 498.2,386.1 498.5,383.0C498.8,379.9 499.0,374.9 499.3,375.4C499.6,375.9 499.8,383.1 500.1,386.2C500.4,389.2 500.7,393.3 501.0,393.7C501.3,394.1 501.4,388.6 501.7,388.3C501.9,388.0 502.2,389.5 502.5,391.6C502.8,393.7 503.2,398.6 503.7,400.7C504.2,402.8 504.9,404.7 505.3,404.0C505.8,403.3 506.0,398.2 506.4,396.4C506.8,394.6 507.1,392.5 507.5,393.2C507.9,393.9 508.2,398.0 508.6,400.7C509.0,403.4 509.2,407.0 509.6,409.3C510.0,411.6 510.5,413.4 510.9,414.7C511.3,416.0 511.5,417.4 511.8,416.9C512.1,416.4 512.3,413.1 512.6,411.5C512.9,409.9 513.1,406.7 513.4,407.2C513.6,407.7 513.8,412.2 514.1,414.7C514.4,417.2 514.7,420.0 515.0,422.2C515.3,424.4 515.8,427.4 516.1,427.6C516.5,427.8 516.8,423.1 517.1,423.3C517.5,423.5 517.8,426.9 518.2,428.7C518.6,430.5 518.9,433.8 519.3,434.0C519.7,434.2 520.0,429.9 520.4,429.7C520.8,429.5 521.2,432.1 521.7,433.0C522.2,433.9 522.7,435.1 523.1,435.1C523.5,435.1 523.8,433.5 524.1,433.0C524.5,432.5 524.8,431.2 525.2,431.9C525.6,432.6 525.9,435.1 526.3,437.3C526.7,439.5 527.1,443.2 527.4,444.8C527.7,446.4 527.8,448.4 528.1,447.2C528.4,445.9 528.7,440.9 529.0,437.3C529.3,433.7 529.5,428.4 529.8,425.4C530.1,422.3 530.3,419.0 530.6,419.0C530.9,419.0 531.2,424.0 531.6,425.4C532.0,426.8 532.3,427.3 532.7,427.6C533.1,427.9 533.4,425.9 533.8,427.1C534.2,428.4 534.6,432.3 534.9,435.1C535.2,437.9 535.3,441.0 535.6,443.7C535.9,446.4 536.2,450.9 536.5,451.1C536.8,451.3 537.3,446.3 537.6,444.7C537.9,443.1 538.2,441.9 538.5,441.5C538.8,441.1 539.1,443.6 539.4,442.5C539.7,441.4 540.1,437.5 540.5,435.0C540.9,432.5 541.5,428.3 541.9,427.6C542.3,426.9 542.5,428.7 542.9,430.8C543.2,432.9 543.6,438.1 544.0,440.5C544.4,442.9 544.8,444.1 545.1,445.2C545.5,446.2 545.7,446.7 546.1,446.8C546.5,446.9 547.2,445.8 547.8,445.8C548.3,445.8 548.9,447.1 549.4,446.8C549.9,446.5 550.6,443.9 551.0,444.1C551.4,444.3 551.4,446.5 551.7,448.0C552.0,449.5 552.3,450.7 552.6,453.3C552.9,455.9 553.3,462.7 553.7,463.5C554.1,464.3 554.6,458.9 555.0,458.1C555.4,457.3 555.5,457.7 555.8,458.6C556.1,459.5 556.4,463.9 556.7,463.5C557.0,463.1 557.1,458.9 557.4,456.5C557.7,454.1 558.0,450.9 558.5,449.0C559.0,447.1 559.6,445.2 560.1,445.2C560.6,445.2 560.8,447.3 561.2,449.0C561.6,450.7 561.9,453.6 562.3,455.4C562.6,457.2 562.9,457.9 563.3,459.7C563.6,461.5 564.0,464.0 564.4,466.1C564.8,468.2 565.1,472.1 565.5,472.1C565.9,472.1 566.2,467.8 566.6,466.1C567.0,464.4 567.2,463.0 567.6,461.9C568.0,460.8 568.3,461.5 568.7,459.7C569.1,457.9 569.4,453.6 569.8,451.1C570.2,448.6 570.6,446.2 570.9,444.7C571.2,443.2 571.3,440.9 571.6,442.0C571.9,443.1 572.2,447.4 572.5,451.1C572.8,454.8 573.1,460.9 573.5,464.0C573.9,467.1 574.2,469.9 574.6,469.4C575.0,468.9 575.4,462.4 575.7,460.8C576.0,459.2 576.1,458.8 576.4,459.7C576.7,460.6 577.0,464.8 577.3,466.1C577.6,467.5 577.9,468.3 578.2,467.8C578.5,467.3 578.8,464.4 579.2,462.9C579.6,461.4 580.1,458.1 580.5,458.6C580.9,459.1 581.2,463.8 581.6,466.1C582.0,468.4 582.4,471.0 582.7,472.6C583.0,474.2 583.2,476.9 583.5,475.8C583.8,474.7 584.2,469.3 584.6,466.1C585.0,462.9 585.3,458.6 585.7,456.5C586.1,454.4 586.6,454.6 587.0,453.3C587.4,452.1 587.6,450.3 588.0,449.0C588.4,447.7 588.8,445.0 589.1,445.7C589.4,446.4 589.7,451.1 590.0,453.3C590.3,455.6 590.6,458.7 591.0,459.2C591.4,459.7 591.8,457.7 592.1,456.5C592.4,455.3 592.6,453.2 592.9,452.2C593.2,451.2 593.6,450.4 593.9,450.6C594.2,450.8 594.6,452.9 594.7,453.3" stroke="#8ae234"/>
</g>
</svg>
<div class="lbl" style="left:2.1px;top:28.7px">86°C</div>
<div class="lbl" style="left:2.1px;top:547.6px">66°C</div>
<div class="lbl" style="left:17.3px;top:549.6px">11:43</div>
<div class="lbl" style="left:581.1px;top:549.6px">12:03</div>
<div class="abs" style="left:597px;top:28px;width:427px;height:530px;box-sizing:border-box;border:1px solid #dcd8d3;"></div>
<div id="panel" class="abs"></div>
<div id="hdr"><span style="left:4px;transform:scaleX(1.04)">Sensor</span><i style="left:49px"></i><span style="left:53.2px;transform:scaleX(1.11)">Value</span><i style="left:79px"></i><span style="left:82.8px;transform:scaleX(1.11)">Min</span><i style="left:99.8px"></i><span style="left:104px;transform:scaleX(1.10)">Max</span><i style="left:123px"></i><span style="left:127.5px;transform:scaleX(1.03)">Color</span><i style="left:151.5px"></i><span style="left:155.7px;transform:scaleX(1.10)">Graph</span></div>
<div class="row" style="top:42.1px"><span class="c" style="left:600.6px;top:1.9px;transform:scaleX(1.07)">temp1</span><span class="c" style="left:650.3px;top:1.9px">70°C</span><span class="c" style="left:679.6px;top:1.9px;transform:scaleX(0.98)">66°C</span><span class="c" style="left:701px;top:1.9px;transform:scaleX(0.99)">86°C</span><div class="cb on"><svg width="8" height="8" viewBox="0 0 8 8"><path d="M1.6,4.1 L3.3,5.8 L6.5,2.3" fill="none" stroke="#fff" stroke-width="1.5"/></svg></div></div>
<div class="row" style="top:54.2px"><span class="c" style="left:600.6px;top:1.8px;transform:scaleX(1.07)">temp1</span><span class="c" style="left:650.3px;top:1.8px">72°C</span><span class="c" style="left:679.6px;top:1.8px;transform:scaleX(0.98)">68°C</span><span class="c" style="left:701px;top:1.8px;transform:scaleX(0.99)">82°C</span><div class="cb on"><svg width="8" height="8" viewBox="0 0 8 8"><path d="M1.6,4.1 L3.3,5.8 L6.5,2.3" fill="none" stroke="#fff" stroke-width="1.5"/></svg></div></div>
<div class="row" style="top:66.5px"><span class="c" style="left:600.6px;top:1.5px;transform:scaleX(1.07)">temp1</span><span class="c" style="left:650.3px;top:1.5px">71°C</span><span class="c" style="left:679.6px;top:1.5px;transform:scaleX(0.98)">68°C</span><span class="c" style="left:701px;top:1.5px;transform:scaleX(0.99)">81°C</span><div class="cb on"><svg width="8" height="8" viewBox="0 0 8 8"><path d="M1.6,4.1 L3.3,5.8 L6.5,2.3" fill="none" stroke="#fff" stroke-width="1.5"/></svg></div></div>
<div class="row" style="top:78.8px"><span class="c" style="left:600.6px;top:1.8px;transform:scaleX(1.07)">temp1</span><span class="c" style="left:650.3px;top:1.8px">70°C</span><span class="c" style="left:679.6px;top:1.8px;transform:scaleX(0.98)">66°C</span><span class="c" style="left:701px;top:1.8px;transform:scaleX(0.99)">81°C</span><div class="cb on"><svg width="8" height="8" viewBox="0 0 8 8"><path d="M1.6,4.1 L3.3,5.8 L6.5,2.3" fill="none" stroke="#fff" stroke-width="1.5"/></svg></div></div>
<div class="row" style="top:91.0px"><span class="c" style="left:600.6px;top:1.8px;transform:scaleX(0.95)">CPU usage</span><span class="c" style="left:650.3px;top:1.8px">4%</span><span class="c" style="left:679.6px;top:1.8px;transform:scaleX(0.98)">1%</span><span class="c" style="left:701px;top:1.8px;transform:scaleX(0.99)">97%</span><div class="cb"></div> <span class="foc"></span></div>
<div class="row" style="top:103.2px"><span class="c" style="left:600.6px;top:1.8px;transform:scaleX(1.05)">free memory</span><span class="c" style="left:650.3px;top:1.8px">7%</span><span class="c" style="left:679.6px;top:1.8px;transform:scaleX(0.98)">1%</span><span class="c" style="left:701px;top:1.8px;transform:scaleX(0.99)">13%</span><div class="cb"></div></div>

<div class="abs" style="left:722px;top:42.1px;width:28.2px;height:12.15px;background:#ef2929"></div><div class="abs" style="left:722px;top:54.2px;width:28.2px;height:12.35px;background:#fcaf3e"></div><div class="abs" style="left:722px;top:66.5px;width:28.2px;height:12.35px;background:#fce94f"></div><div class="abs" style="left:722px;top:78.8px;width:28.2px;height:12.25px;background:#8ae234"></div><div class="abs" style="left:722px;top:91.0px;width:28.2px;height:12.25px;background:#729fcf"></div><div class="abs" style="left:722px;top:103.2px;width:28.2px;height:12.25px;background:#ad7fa8"></div>
</body></html>
